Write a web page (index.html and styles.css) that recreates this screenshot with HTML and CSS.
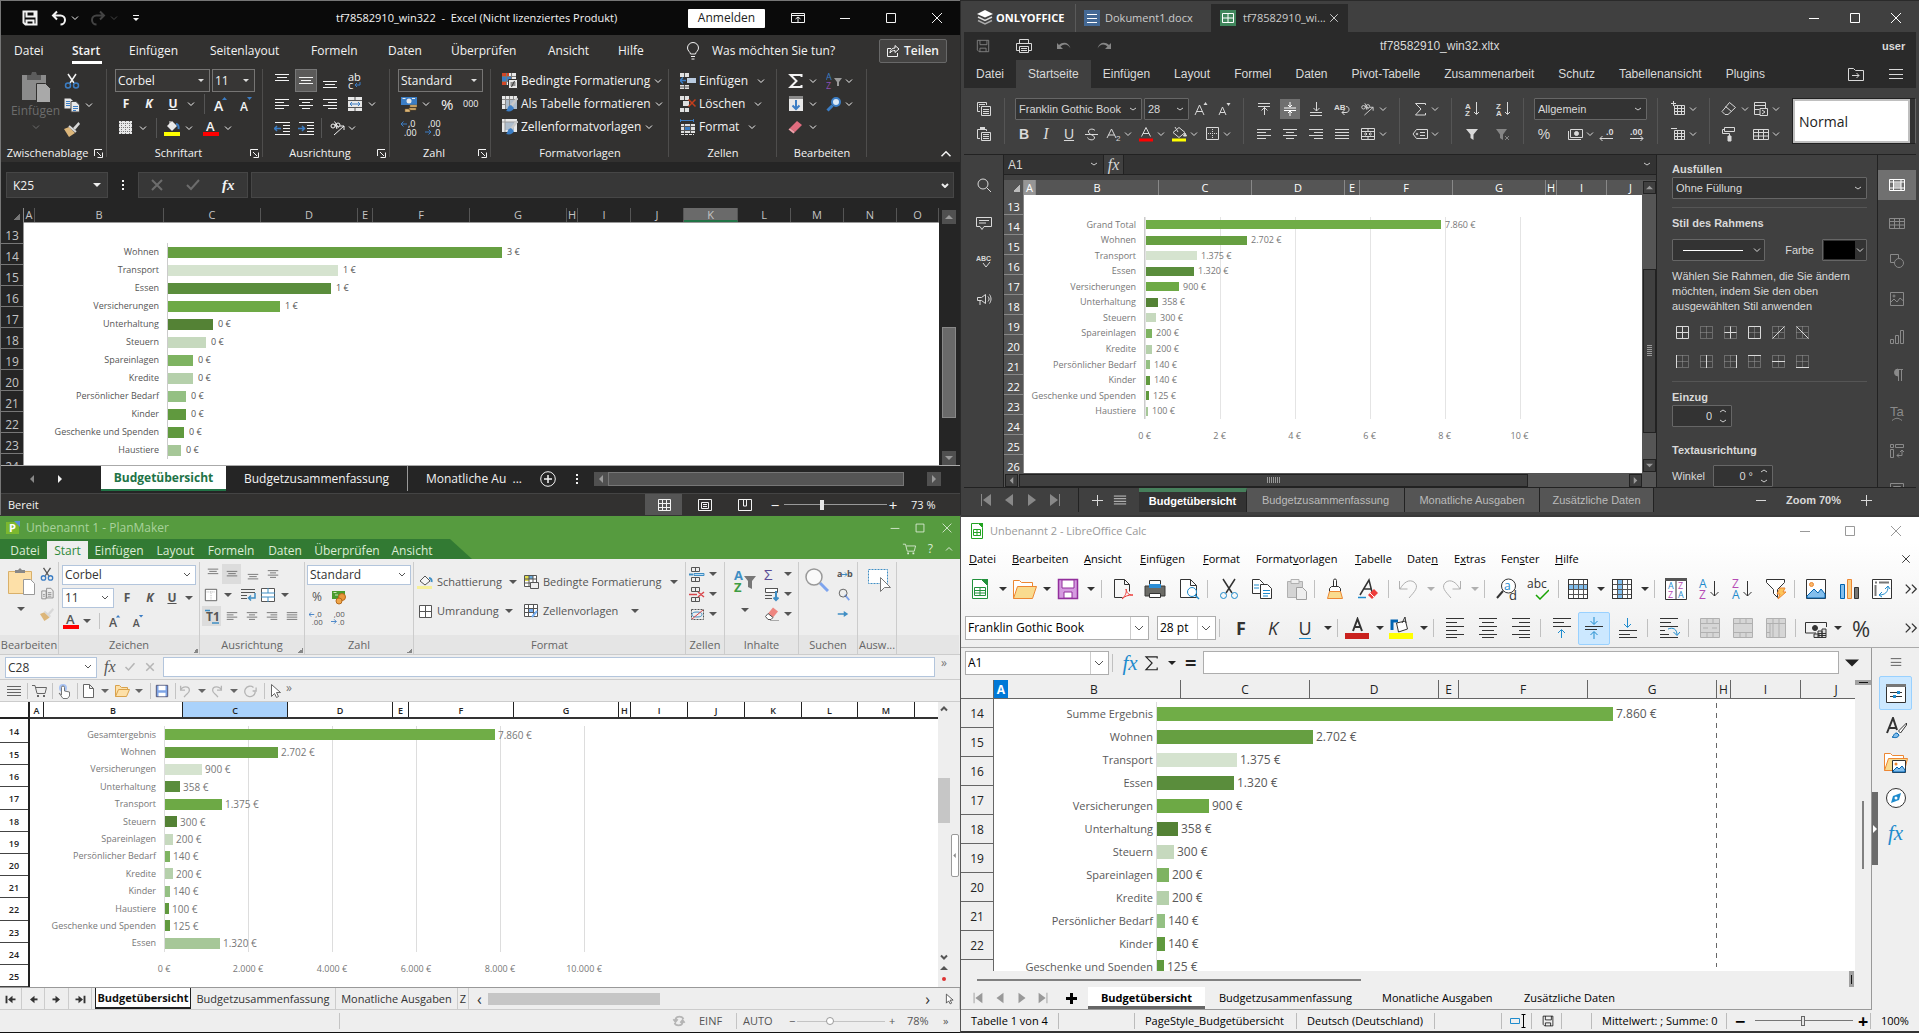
FILE: index.html
```html
<!DOCTYPE html>
<html lang="de">
<head>
<meta charset="utf-8">
<title>Tabellenkalkulationen im Vergleich</title>
<link rel="stylesheet" href="styles.css">
</head>
<body>
<svg class="sprite" aria-hidden="true">
<defs>
<symbol id="chev" viewBox="0 0 8 8"><path d="M1 2.500l3 3 3-3"/></symbol>
<symbol id="tri" viewBox="0 0 8 8"><path d="M0 2h8l-4 4z" fill="currentColor" stroke="none"/></symbol>
<symbol id="up" viewBox="0 0 8 8"><path d="M0 6h8l-4-4z" fill="currentColor" stroke="none"/></symbol>
<symbol id="lt" viewBox="0 0 8 8"><path d="M6 0v8l-4-4z" fill="currentColor" stroke="none"/></symbol>
<symbol id="rt" viewBox="0 0 8 8"><path d="M2 0v8l4-4z" fill="currentColor" stroke="none"/></symbol>
<symbol id="first" viewBox="0 0 16 16"><path d="M13 2v12l-8-6z" fill="currentColor" stroke="none"/><path d="M3.500 2v12"/></symbol>
<symbol id="prev" viewBox="0 0 16 16"><path d="M12 2v12l-8-6z" fill="currentColor" stroke="none"/></symbol>
<symbol id="next" viewBox="0 0 16 16"><path d="M4 2v12l8-6z" fill="currentColor" stroke="none"/></symbol>
<symbol id="last" viewBox="0 0 16 16"><path d="M3 2v12l8-6z" fill="currentColor" stroke="none"/><path d="M12.500 2v12"/></symbol>
<symbol id="min" viewBox="0 0 16 16"><path d="M3 8.500h10"/></symbol>
<symbol id="max" viewBox="0 0 16 16"><path d="M3.500 3.500h9v9h-9z"/></symbol>
<symbol id="x" viewBox="0 0 16 16"><path d="M3 3l10 10M13 3L3 13"/></symbol>
<symbol id="plus" viewBox="0 0 16 16"><path d="M3 8.500h11M8.500 3v11"/></symbol>
<symbol id="menu" viewBox="0 0 16 16"><path d="M1 3.500h14M1 8.500h14M1 12.500h14"/></symbol>
<symbol id="save" viewBox="0 0 16 16"><path d="M1.500 1.500h13v13h-11l-2-2zM4.500 1.500v5h8v-5M4.500 14.500v-4h7v4"/></symbol>
<symbol id="undo" viewBox="0 0 16 16"><path d="M2 5.500h7.500a4.500 4.500 0 0 1 0 9M6 1.500l-4 4 4 4"/></symbol>
<symbol id="redo" viewBox="0 0 16 16"><path d="M14 5.500H6.500a4.500 4.500 0 0 0 0 9M10 1.500l4 4-4 4"/></symbol>
<symbol id="custom" viewBox="0 0 8 8"><path d="M1 1.500h6"/><path d="M1 4h6l-3 3z" fill="currentColor" stroke="none"/></symbol>
<symbol id="ribbon" viewBox="0 0 16 16"><path d="M1.500 3.500h13v9h-13zM1.500 5.500h13M8 12V7M5.500 9L8 7l2.500 2"/></symbol>
<symbol id="bulb" viewBox="0 0 16 18"><path d="M5.500 12c0-2-3-3-3-6a5.500 5.500 0 0 1 11 0c0 3-3 4-3 6zM6 14.500h4M6.500 17h3"/></symbol>
<symbol id="share" viewBox="0 0 14 14"><path d="M5 4.500H1.500v8h10V9M4 9c0-3 2-5 5-5V1.500L13 5 9 8.500V6.500C7 6.500 5 7 4 9z"/></symbol>
<symbol id="clip" viewBox="0 0 32 32"><path d="M2 4h24v25H2z" fill="#8b8b8b" stroke="none"/><path d="M7 4h4l1-3h4l1 3h4v5H7z" fill="#5c5c5c" stroke="none"/><path d="M16.500 12.500h9l5 5v14h-14z" fill="#a9a9a9" stroke="#323130"/></symbol>
<symbol id="cut" viewBox="0 0 16 16"><path d="M4 1l6 9M12 1L6 10" stroke-width="1.500"/><g stroke="#3b7dc4" stroke-width="1.500"><circle cx="4" cy="12.500" r="2.500"/><circle cx="12" cy="12.500" r="2.500"/></g></symbol>
<symbol id="copy" viewBox="0 0 16 16"><path d="M.5 1.500h6l2 2v8h-8z" fill="#e8e8e8" stroke="none"/><path d="M7 4.500h5l3.500 3.500v7H7z" fill="#e8e8e8" stroke="#444"/><path d="M2 4.500h4M2 6.500h4M2 8.500h4M9 9.500h5M9 11.500h5M9 13.500h3" stroke="#3b7dc4"/></symbol>
<symbol id="brush" viewBox="0 0 16 16"><path d="M9 7l5.500-6L16 3l-5 6z" fill="#d8d8d8" stroke="none"/><path d="M0 8l5-2 6 6-6 4z" fill="#dcb67a" stroke="none"/><path d="M5 5l7 6" stroke="#d8d8d8" stroke-width="2"/></symbol>
<symbol id="launch" viewBox="0 0 9 9"><path d="M.5 7V.5H8M3 3l4 4M8.500 3.500v5h-5"/></symbol>
<symbol id="al" viewBox="0 0 16 16"><path d="M1 3.500h14M1 6.500h9M1 9.500h14M1 12.500h9"/></symbol>
<symbol id="ac" viewBox="0 0 16 16"><path d="M1 3.500h14M4 6.500h8M1 9.500h14M4 12.500h8"/></symbol>
<symbol id="ar" viewBox="0 0 16 16"><path d="M1 3.500h14M6 6.500h9M1 9.500h14M6 12.500h9"/></symbol>
<symbol id="aj" viewBox="0 0 16 16"><path d="M1 3.500h14M1 6.500h14M1 9.500h14M1 12.500h14"/></symbol>
<symbol id="vt" viewBox="0 0 16 16"><path d="M1 1.500h14M3 4.500h10M1 7.500h14"/></symbol>
<symbol id="vm" viewBox="0 0 16 16"><path d="M1 4.500h14M3 7.500h10M1 10.500h14"/></symbol>
<symbol id="vb" viewBox="0 0 16 16"><path d="M1 8.500h14M3 11.500h10M1 14.500h14"/></symbol>
<symbol id="wrap" viewBox="0 0 16 16"><text x="1" y="8" font-size="11" fill="currentColor" stroke="none">ab</text><text x="1" y="16" font-size="11" fill="currentColor" stroke="none">c</text><path d="M13 9v3H8M10 10l-2 2 2 2" stroke="#3b7dc4"/></symbol>
<symbol id="merge" viewBox="0 0 16 16"><path d="M1 1h14v14H1z" fill="#e8e8e8" stroke="none"/><path d="M1 4.500h14M1 11.500h14M8 1v3M8 12v3" stroke="#555"/><path d="M3 8h10M5 6L3 8l2 2M11 6l2 2-2 2" stroke="#3b7dc4"/></symbol>
<symbol id="outd" viewBox="0 0 16 16"><path d="M1 2.500h15M9 5.500h7M9 8.500h7M9 11.500h7M1 14.500h15"/><path d="M0 8.500h7M3 6L.5 8.500 3 11" stroke="#3b7dc4" stroke-width="1.500"/></symbol>
<symbol id="ind" viewBox="0 0 16 16"><path d="M1 2.500h15M9 5.500h7M9 8.500h7M9 11.500h7M1 14.500h15"/><path d="M0 8.500h7M4 6l2.500 2.500L4 11" stroke="#3b7dc4" stroke-width="1.500"/></symbol>
<symbol id="orient" viewBox="0 0 16 16"><circle cx="4" cy="6" r="2"/><path d="M6 4l2 5M5.500 1.500l4 6"/><circle cx="9" cy="5" r="2"/><path d="M5 15L15 6M15 10V6h-4"/></symbol>
<symbol id="grid4" viewBox="0 0 16 16"><path d="M1.500 1.500h12v12h-12z"/><path d="M7.500 3v10M3 7.500h10" stroke-dasharray="1 1"/></symbol>
<symbol id="xborder" viewBox="0 0 16 16"><path d="M1 1h13v13H1z" fill="#e8e8e8" stroke="none"/><path d="M3.500 1v13M7.500 1v13M11.500 1v13M1 3.500h13M1 7.500h13M1 11.500h13" stroke="#777" stroke-dasharray="1 1"/></symbol>
<symbol id="fill" viewBox="0 0 16 16"><path d="M3 6l5-5 5 5-5 5z" fill="#e8e8e8" stroke="none"/><path d="M6 5V1" /><path d="M12 4c2 0 3 2 2.500 5" stroke="#3b7dc4" stroke-width="2"/><path d="M0 12h16v4H0z" fill="#ff0" stroke="none"/></symbol>
<symbol id="fcol" viewBox="0 0 16 16"><text x="3" y="11" font-size="13" font-weight="600" fill="currentColor" stroke="none">A</text><path d="M0 12h16v4H0z" fill="red" stroke="none"/></symbol>
<symbol id="fup" viewBox="0 0 16 16"><text x="1" y="15" font-size="14" font-weight="600" fill="currentColor" stroke="none">A</text><path d="M9 4l2.500-3L14 4z" fill="#3b7dc4" stroke="none"/></symbol>
<symbol id="fdn" viewBox="0 0 16 16"><text x="2" y="15" font-size="12" font-weight="600" fill="currentColor" stroke="none">A</text><path d="M9 1l2.500 3L14 1z" fill="#3b7dc4" stroke="none"/></symbol>
<symbol id="cash" viewBox="0 0 16 16"><path d="M0 1h16v8H0z" fill="#3b7dc4" stroke="none"/><circle cx="8" cy="5" r="2.500" fill="#e8e8e8" stroke="none"/><path d="M1.500 2.500h3M11 2.500h3" stroke="#e8e8e8"/><path d="M9 9h7v2H9zM8 12h7v2H8zM4 13h5v3H4z" fill="#dcb67a" stroke="#7a5b26" stroke-width=".5"/></symbol>
<symbol id="dinc" viewBox="0 0 16 16"><text x="7" y="7" font-size="9" fill="currentColor" stroke="none">,0</text><text x="3" y="16" font-size="9" fill="currentColor" stroke="none">,00</text><path d="M0 4h6M2.500 1.500L0 4l2.500 2.500" stroke="#3b7dc4"/></symbol>
<symbol id="ddec" viewBox="0 0 16 16"><text x="3" y="7" font-size="9" fill="currentColor" stroke="none">,00</text><text x="8" y="16" font-size="9" fill="currentColor" stroke="none">,0</text><path d="M0 12h6M3.500 9.500L6 12l-2.500 2.500" stroke="#3b7dc4"/></symbol>
<symbol id="cond" viewBox="0 0 16 16"><path d="M0 0h14v12H0z" fill="#e8e8e8" stroke="none"/><path d="M0 0h7v3H0zM0 9h4v3H0z" fill="#d24726" stroke="none"/><path d="M0 4h9v4H0z" fill="#3b7dc4" stroke="none"/><path d="M4.500 0v12M9.500 0v12M0 3.500h14M0 8.500h14" stroke="#777"/><path d="M6.500 6.500h9v9h-9z" fill="#e8e8e8" stroke="#323130"/><path d="M8.500 10h5M8.500 12h5M12.500 8l-3 6" stroke="#333"/></symbol>
<symbol id="tblf" viewBox="0 0 16 16"><path d="M0 0h15v13H0z" fill="#e8e8e8" stroke="none"/><path d="M4 4h11v9H4z" fill="#aebdcc" stroke="none"/><path d="M3.500 0v13M7.500 0v13M11.500 0v4M0 3.500h15M0 8.500h4" stroke="#888"/><path d="M15.500 2L9 10" stroke="#c9c9c9" stroke-width="2.500"/><path d="M9 9l3 3c-1 3-4 4-8 3 2-1 1-5 5-6z" fill="#3b7dc4" stroke="none"/></symbol>
<symbol id="cellst" viewBox="0 0 16 16"><path d="M0 0h15v13H0z" fill="#e8e8e8" stroke="none"/><path d="M3 3h9v8H3z" fill="#aebdcc" stroke="none"/><path d="M3 0v13M0 3h15" stroke="#999"/><path d="M15.500 2L9 10" stroke="#c9c9c9" stroke-width="2.500"/><path d="M9 9l3 3c-1 3-4 4-8 3 2-1 1-5 5-6z" fill="#3b7dc4" stroke="none"/></symbol>
<symbol id="cins" viewBox="0 0 16 16"><path d="M0 0h9v4H0zM0 12h9v4H0z" fill="#e0e0e0" stroke="none"/><path d="M7 5h9v5H7z" fill="#b9cbe0" stroke="none"/><path d="M4.500 0v4M4.500 12v4M0 14h9" stroke="#555"/><path d="M0 7.500h6M3 4.500l-3 3 3 3" stroke="#3b7dc4" stroke-width="1.500"/></symbol>
<symbol id="cdel" viewBox="0 0 16 16"><path d="M0 0h9v4H0zM0 12h9v4H0zM3 5h6v5H3z" fill="#e0e0e0" stroke="none"/><path d="M4.500 0v4M4.500 12v4" stroke="#555"/><path d="M8.500 3.500l7 7M15.500 3.500l-7 7" stroke="#c43e1c" stroke-width="1.500"/></symbol>
<symbol id="cfmt" viewBox="0 0 16 16"><path d="M1 1.500h12M.5 0v3M13.500 0v3" stroke="#3b7dc4"/><path d="M1 5h14v9H1z" fill="#e0e0e0" stroke="none"/><path d="M5 7h5v4H5z" fill="#3b7dc4" stroke="none"/><path d="M4.500 5v9M10.500 5v9M1 7.500h14M1 11.500h14" stroke="#555"/><path d="M1 15.500h13" stroke="#e0e0e0" stroke-dasharray="3 1"/></symbol>
<symbol id="sum" viewBox="0 0 16 16"><path d="M13.500 4V2H2.500l6 6-6 6h11v-2" stroke-width="2"/></symbol>
<symbol id="azf" viewBox="0 0 16 16"><text x="0" y="7" font-size="9" fill="#3b7dc4" stroke="none">A</text><text x="0" y="16" font-size="9" fill="#8e4fb5" stroke="none">Z</text><path d="M8 5h8l-3 4v4h-2V9z" fill="#9a9a9a" stroke="none"/></symbol>
<symbol id="fdown" viewBox="0 0 16 16"><path d="M1 1h14v14H1z" fill="#e8e8e8" stroke="none"/><path d="M1 0h14v3H1z" fill="#8a8a8a" stroke="none"/><path d="M8 4v9M4.500 9.500L8 13l3.500-3.500" stroke="#3b7dc4" stroke-width="2"/></symbol>
<symbol id="find" viewBox="0 0 16 16"><circle cx="10" cy="6" r="4" fill="#dbe9f7" stroke="#3b7dc4" stroke-width="2"/><path d="M6.500 9.500l-5 5" stroke="#3b7dc4" stroke-width="3"/></symbol>
<symbol id="eras" viewBox="0 0 16 16"><path d="M9 2l5 4-7 7-5-4z" fill="#e06c7e" stroke="none"/><path d="M2 9l5 4-1.500 1.500-5-4z" fill="#f0a0aa" stroke="none"/></symbol>
<symbol id="check" viewBox="0 0 16 16"><path d="M2 8l4 4 8-9" stroke-width="2"/></symbol>
<symbol id="normal" viewBox="0 0 16 16"><path d="M2.500 2.500h12v11h-12zM6.500 2v12M10.500 2v12M2 6.500h13M2 10.500h13"/></symbol>
<symbol id="page" viewBox="0 0 16 16"><path d="M1.500 2.500h13v11h-13zM4.500 5.500h7v6h-7zM6 7.500h4M6 9.500h4"/></symbol>
<symbol id="brk" viewBox="0 0 16 16"><path d="M1.500 13.500v-11h13v11zM6.500 3v6h3V3"/></symbol>
<symbol id="plusc" viewBox="0 0 16 16"><circle cx="8" cy="8" r="7.300"/><path d="M8 4v8M4 8h8" stroke-width="1.500"/></symbol>
<symbol id="dots" viewBox="0 0 8 16"><path d="M3 3h2v2H3zM3 7h2v2H3zM3 11h2v2H3z" fill="currentColor" stroke="none"/></symbol>

<symbol id="oologo" viewBox="0 0 16 16"><path d="M8 7.500L0 4l8-4 8 4z" fill="#fff" stroke="none"/><path d="M1 7l7 3.500L15 7" stroke="#ddd" stroke-width="1.500"/><path d="M1 10.500L8 14l7-3.500" stroke="#aaa" stroke-width="1.500"/></symbol>
<symbol id="oodoc" viewBox="0 0 16 16"><path d="M0 0h16v16H0z" fill="#446995" stroke="none"/><path d="M3 4.500h10M3 8.500h10M3 12.500h10" stroke="#fff"/></symbol>
<symbol id="oosheet" viewBox="0 0 16 16"><path d="M0 0h16v16H0z" fill="#40865c" stroke="none"/><path d="M2.500 3.500h11v9h-11zM8 3.500v9M2.500 8h11" stroke="#fff"/></symbol>
<symbol id="print" viewBox="0 0 16 16"><path d="M3.500 5.500v-4h9v4M3.500 12.500h-3v-7h15v7h-3M3.500 8.500h9v6h-9zM5 10.500h6M5 12.500h6"/></symbol>
<symbol id="ooundo" viewBox="0 0 16 16"><path d="M1 5v6h6L4.500 8.500C8 5 12 6 14.500 10.500 13 4 7 3 3 7z" fill="currentColor" stroke="none"/></symbol>
<symbol id="ooredo" viewBox="0 0 16 16"><path d="M15 5v6H9l2.500-2.500C8 5 4 6 1.500 10.500 3 4 9 3 13 7z" fill="currentColor" stroke="none"/></symbol>
<symbol id="folder" viewBox="0 0 16 16"><path d="M.5 14.500v-12h5l2 2h8v10zM4 9.500h7M8.500 7l2.500 2.500L8.500 12"/></symbol>
<symbol id="oocopy" viewBox="0 0 16 16"><path d="M4 10.500H1.500v-9h9V4M3 3.500h6M3 5.500h1M5.500 5.500h9v9h-9zM7 8.500h6M7 10.500h6M7 12.500h6"/></symbol>
<symbol id="oopaste" viewBox="0 0 16 16"><path d="M4 12.500H1.500v-9H4M8 3.500h2.500V5M5.500 6.500h9v8h-9zM7 8.500h6M7 10.500h6M7 12.500h6"/><path d="M4 1h5v3H4z" fill="currentColor" stroke="none"/></symbol>
<symbol id="oofup" viewBox="0 0 16 16"><path d="M2 14L6.500 4 11 14M3.500 10.500h6"/><path d="M10.500 4L12.500 1l2 3z" fill="currentColor" stroke="none"/></symbol>
<symbol id="oofdn" viewBox="0 0 16 16"><path d="M3 14l3.500-8L10 14M4 11.500h5"/><path d="M10.500 2l2 3 2-3z" fill="currentColor" stroke="none"/></symbol>
<symbol id="ooa" viewBox="0 0 16 16"><path d="M3.500 10.500L8 1.500l4.500 9M5 7.500h6"/><path d="M1 12.500h14v3H1z" fill="red" stroke="none"/></symbol>
<symbol id="oofill" viewBox="0 0 16 16"><path d="M2 6.500l6-5 6 5-6 5zM4 1l3 5"/><path d="M14 7l1.500 3h-3z" fill="currentColor"/><path d="M1 12.500h14v3H1z" fill="#ff0" stroke="none"/></symbol>
<symbol id="asub" viewBox="0 0 16 16"><path d="M1 12L5.500 3 10 12M2.500 9h6"/><text x="10" y="15" font-size="8" fill="currentColor" stroke="none">2</text></symbol>
<symbol id="strike" viewBox="0 0 16 16"><path d="M2 8.500h13M12 4.500C10 2 5 3 5.500 6S12 9 11.500 12 5 14 4.500 11.500"/></symbol>
<symbol id="oovt" viewBox="0 0 16 16"><path d="M2 2.500h12M2 5.500h12M8.500 14V6M5.500 9.500l3-3 3 3"/></symbol>
<symbol id="oovm" viewBox="0 0 16 16"><path d="M2 7h12M2 9.500h12M8 1v5M6 4l2 2 2-2M8 15v-5M6 12l2-2 2 2"/></symbol>
<symbol id="oovb" viewBox="0 0 16 16"><path d="M2 11.500h12M2 14.500h12M8.500 1v9M5.500 7l3 3 3-3"/></symbol>
<symbol id="oowrap" viewBox="0 0 16 16"><text x="0" y="9" font-size="8" font-weight="700" fill="currentColor" stroke="none">AB</text><path d="M12 5.500c4 0 4 6 0 6H8M10.500 9L8 11.500l2.500 2.500"/></symbol>
<symbol id="oomerge" viewBox="0 0 16 16"><path d="M1.500 2.500h13v11h-13zM1.500 5.500h13M1.500 10.500h13M8 2.500v3M8 10.500v3M4 8h3M9 8h3M5.500 6.500L7 8 5.500 9.500M10.500 6.500L9 8l1.500 1.500"/></symbol>
<symbol id="oosum" viewBox="0 0 16 16"><path d="M13.500 4V2.500H3.500L9 8l-5.500 6h10V12"/></symbol>
<symbol id="ootag" viewBox="0 0 16 16"><path d="M4.500 3.500h11v9h-11L1 8zM8 6.500h5M8 9.500h5"/><circle cx="5" cy="8" r=".8"/></symbol>
<symbol id="ooaz" viewBox="0 0 16 16"><text x="1" y="8" font-size="8" font-weight="700" fill="currentColor" stroke="none">A</text><text x="1" y="15" font-size="8" font-weight="700" fill="currentColor" stroke="none">Z</text><path d="M12.500 1v12M10 11l2.500 2.500L15 11"/></symbol>
<symbol id="ooza" viewBox="0 0 16 16"><text x="1" y="8" font-size="8" font-weight="700" fill="currentColor" stroke="none">Z</text><text x="1" y="15" font-size="8" font-weight="700" fill="currentColor" stroke="none">A</text><path d="M12.500 1v12M10 11l2.500 2.500L15 11"/></symbol>
<symbol id="filt" viewBox="0 0 16 16"><path d="M2 3h12L9.500 8.500V14L6.500 12V8.500z" fill="currentColor" stroke="none"/></symbol>
<symbol id="filtx" viewBox="0 0 16 16"><path d="M1 3h11L8 8.500V14L5 12V8.500z" fill="currentColor" stroke="none"/><path d="M10 10l4 4M14 10l-4 4"/></symbol>
<symbol id="oocash" viewBox="0 0 16 16"><path d="M3.500 3.500h12v8h-12zM1.500 5v8.500H14"/><circle cx="9.500" cy="7.500" r="2" fill="currentColor"/></symbol>
<symbol id="oodd" viewBox="0 0 16 16"><text x="7" y="9" font-size="9" font-weight="700" fill="currentColor" stroke="none">.0</text><path d="M1 12.500h13M3.500 10L1 12.500 3.500 15"/></symbol>
<symbol id="oodi" viewBox="0 0 16 16"><text x="1" y="9" font-size="9" font-weight="700" fill="currentColor" stroke="none">.00</text><path d="M1 12.500h13M11.500 10l2.500 2.500-2.500 2.500"/></symbol>
<symbol id="ooins" viewBox="0 0 16 16"><path d="M4.500 4.500h10v9h-10zM4.500 7.500h10M4.500 10.500h10M7.500 4.500v9M11.500 4.500v9M1 2.500h5M3.500 0v5"/></symbol>
<symbol id="oodel" viewBox="0 0 16 16"><path d="M4.500 4.500h10v9h-10zM4.500 7.500h10M4.500 10.500h10M7.500 4.500v9M11.500 4.500v9M1 2.500h6"/></symbol>
<symbol id="ooeras" viewBox="0 0 16 16"><path d="M8.500 1.500l6 5-7.500 7H4l-3-3zM4.500 5.500l6 5"/></symbol>
<symbol id="oocond" viewBox="0 0 16 16"><path d="M1.500 1.500h11v12h-11zM1.500 4.500h11M1.500 8.500h5"/><path d="M7 7.500h7.500v7H7z" fill="#404040"/><path d="M9 9l3 2-3 2"/></symbol>
<symbol id="oobrush" viewBox="0 0 16 16"><path d="M3.500 1.500h10v4h-10zM3.500 3.500h-2v4h7v3"/><path d="M7 10h3v5H7z" fill="currentColor"/></symbol>
<symbol id="ootab" viewBox="0 0 16 16"><path d="M.5 3.500h15v10H.5zM.5 6.500h15M.5 10h15M5.500 3.500v10M10.500 3.500v10"/></symbol>
<symbol id="search" viewBox="0 0 16 16"><circle cx="7" cy="7" r="5"/><path d="M10.500 10.500L15 15"/></symbol>
<symbol id="comment" viewBox="0 0 16 16"><path d="M.5 2.500h15v9H8l-2 3-2-3H.5zM3 5.500h10M3 8h7"/></symbol>
<symbol id="spell" viewBox="0 0 16 16"><text x="0" y="8" font-size="7" font-weight="700" fill="currentColor" stroke="none">ABC</text><path d="M7 10l3 4 4-5"/></symbol>
<symbol id="horn" viewBox="0 0 16 16"><path d="M1.500 6.500h4l4-3v9l-4-3h-4zM4 10v4M12 5.500c1.500 2 1.500 3 0 5M13.500 3.500c2 3 2 6 0 9"/></symbol>
<symbol id="oocell" viewBox="0 0 16 16"><path d="M5 5.500h7v5H5z" fill="#bbb" stroke="none"/><path d="M.5 2.500h15v11H.5zM4.500 2.500v11M12 2.500v11M.5 5h15M.5 11h15"/></symbol>
<symbol id="shape" viewBox="0 0 16 16"><path d="M5 9.500H1.500v-8h8V5"/><circle cx="10" cy="10" r="4.500"/></symbol>
<symbol id="pic" viewBox="0 0 16 16"><path d="M1.500 1.500h13v13h-13zM2 11l3-3 3 3 3-4 3.500 3"/><circle cx="5" cy="5" r="1"/></symbol>
<symbol id="chart" viewBox="0 0 16 16"><path d="M1.500 10.500h3v4h-3zM6.500 6.500h3v8h-3zM11.500 1.500h3v13h-3z"/></symbol>
<symbol id="para" viewBox="0 0 16 16"><path d="M9.500 14V2.500M12.500 14V2.500M14 2.500H7"/><path d="M9 2a3 3 0 0 0 0 7z" fill="currentColor"/></symbol>
<symbol id="ta" viewBox="0 0 16 16"><text x="1" y="11" font-size="13" fill="currentColor" stroke="none">Ta</text><path d="M3 15.500c4-3 6-3 10 0"/></symbol>
<symbol id="pivot" viewBox="0 0 16 16"><path d="M1.500 1.500h3v3h-3zM6.500 1.500h8v3h-8zM1.500 6.500h3v8h-3zM8 12.500h5v-5M10 10.500L8 12.500l2 2M11 9l2-2 2 2"/></symbol>
<symbol id="slicer" viewBox="0 0 16 16"><path d="M1.500 2.500h13v11h-13zM4.500 5.500h7v2h-7zM4.500 10h7"/></symbol>
<symbol id="ball" viewBox="0 0 14 14"><path d="M.5 .5h12v12H.5zM6.500 .5v12M.5 6.500h12"/></symbol>
<symbol id="bno" viewBox="0 0 14 14"><path d="M.5 .5h12v12H.5zM6.500 .5v12M.5 6.500h12" stroke="#999" stroke-dasharray="1 1"/></symbol>

<symbol id="pmlogo" viewBox="0 0 14 14"><path d="M0 1h13v12H0z" fill="#7cb82f" stroke="none"/><path d="M8 0h6v6z" fill="#5b8fd6" stroke="none"/><text x="3" y="11" font-size="11" font-weight="700" fill="#fff" stroke="none">P</text></symbol>
<symbol id="cart" viewBox="0 0 16 16"><path d="M1 2.500h3l2 8h8l1.500-6H5"/><path d="M6 12h2v2H6zM12 12h2v2h-2z" fill="currentColor" stroke="none"/></symbol>
<symbol id="pmclip" viewBox="0 0 28 28"><path d="M1.500 4.500h23v22h-23z" fill="#fde0a8" stroke="#d9b06a"/><path d="M8 5V3h3l2-2 2 2h3v3H8z" fill="#888" stroke="none"/><path d="M16.500 12.500h7l4 4v11h-11z" fill="#fff" stroke="#999"/></symbol>
<symbol id="pmcopy" viewBox="0 0 16 16"><path d="M2 4.500h5v9H2zM7.500 1.500h5l2.500 3v8H7.500zM9 6.500h4M9 8.500h4M9 10.500h4M3.500 8.500h2M3.500 10.500h2" stroke="#888"/></symbol>
<symbol id="pmborder" viewBox="0 0 16 16"><path d="M1.500 1.500h13v13h-13z" fill="#fff"/><path d="M3 4.500h10M8 4v9" stroke="#aaa" stroke-dasharray="1 1"/></symbol>
<symbol id="pmwrap" viewBox="0 0 16 16"><path d="M1 2.500h14M1 5.500h14M1 8.500h6M1 11.500h6"/><path d="M15 6v5H9M11 8.500L8.500 11l2.500 2.500" stroke="#3f8ec4" stroke-width="1.500"/></symbol>
<symbol id="pmmerge" viewBox="0 0 16 16"><path d="M1.500 1.500h13v13h-13z" fill="#fff"/><path d="M1 6h14M1 10h14M8 1v5M8 10v5" stroke="#3f8ec4"/></symbol>
<symbol id="pmcash" viewBox="0 0 16 16"><path d="M1 2h13v8H1z" fill="#4a9c2d" stroke="none"/><path d="M2.500 3.500h3M4 6h3" stroke="#cfe8b8"/><circle cx="11" cy="8" r="3.500" fill="#e8973a" stroke="#b56a1c"/><circle cx="8" cy="12" r="3" fill="#f0a64a" stroke="#b56a1c"/></symbol>
<symbol id="pmfill" viewBox="0 0 16 16"><path d="M3 7l5-5 5 5-5 4z" fill="#f6f6f6"/><path d="M12 4c2 0 3 2 2.500 4" stroke="#3f8ec4" stroke-width="2"/><path d="M0 12h15v3H0z" fill="#f7f09a" stroke="none"/></symbol>
<symbol id="pmgrid" viewBox="0 0 16 16"><path d="M2.500 2.500h12v12h-12z" fill="#fff"/><path d="M8.500 2v12M2 8.500h12"/></symbol>
<symbol id="pmcond" viewBox="0 0 16 16"><path d="M1.500 1.500h12v11h-12z" fill="#fff"/><path d="M2 2h4v5H2z" fill="#e4de4e" stroke="none"/><path d="M6 2h4v3H6z" fill="#68a8d8" stroke="none"/><path d="M6 1v11M10 1v11M2 5h12M2 9h12"/><path d="M7.500 8.500h8v6h-8z" fill="#eee"/></symbol>
<symbol id="pmstyle" viewBox="0 0 16 16"><path d="M1.500 1.500h13v12h-13z" fill="#fff"/><path d="M5.500 1v12M10.500 1v12M1 5.500h14M1 9.500h14"/><path d="M6 6h4v3H6z" fill="#77aef0" stroke="none"/><path d="M14 8l-5 6" stroke="#77aef0" stroke-width="2"/></symbol>
<symbol id="pmins" viewBox="0 0 16 16"><path d="M2.500 1.500h8v4h-8zM6.500 1v4M2.500 11.500h8v4h-8zM6.500 11v4"/><path d="M5 7.500h10v2H5z" fill="#bcdcf2" stroke="#3f8ec4"/><path d="M0 8.500h4" stroke="#3f8ec4" stroke-width="2"/></symbol>
<symbol id="pmdel" viewBox="0 0 16 16"><path d="M2.500 1.500h8v4h-8zM6.500 1v4M2.500 11.500h8v4h-8zM6.500 11v4"/><path d="M0 8.500h8M9 6l6 5M15 6l-6 5" stroke="#d8474c" stroke-width="1.500"/></symbol>
<symbol id="pmhide" viewBox="0 0 16 16"><path d="M2.500 3.500h12v10h-12z" stroke-dasharray="2 1"/><ellipse cx="8" cy="8.500" rx="5" ry="2.500" stroke="#3f8ec4"/><path d="M3 13L14 4" stroke="#d8474c"/></symbol>
<symbol id="pmaz" viewBox="0 0 24 24"><text x="1" y="11" font-size="13" font-weight="700" fill="#3f8ec4" stroke="none">A</text><text x="1" y="23" font-size="13" font-weight="700" fill="#3f9c42" stroke="none">Z</text><path d="M11 7h12l-4 5v8l-4-2v-6z" fill="#777" stroke="none"/></symbol>
<symbol id="pmfilld" viewBox="0 0 16 16"><path d="M1.500 2.500h12v4h-12z" fill="#fff"/><path d="M1 9.500h7M1 12.500h7M1 2.500h13"/><path d="M12 5v9M9.500 11.500L12 14l2.500-2.500" stroke="#3f8ec4" stroke-width="2"/></symbol>
<symbol id="pmeras" viewBox="0 0 16 16"><path d="M9 1.500l5 4-5 6-5-4z" fill="#ee8680" stroke="none"/><path d="M4 7.500l5 4-2 2H4l-2.500-3z" fill="#fff"/><path d="M6 14.500h9" stroke="#aaa"/></symbol>
<symbol id="pmfind" viewBox="0 0 24 24"><path d="M15 15l8 8" stroke="#7ea4ee" stroke-width="3"/><circle cx="9" cy="9" r="8" fill="#fafafa" stroke="#999" stroke-width="1.500"/></symbol>
<symbol id="pmrep" viewBox="0 0 16 16"><text x="0" y="11" font-size="9" font-weight="700" fill="#555" stroke="none">a</text><text x="10" y="11" font-size="9" font-weight="700" fill="#555" stroke="none">b</text><path d="M5 8.500h5M8 6.500l2 2-2 2" stroke="#3f8ec4"/></symbol>
<symbol id="pmfn" viewBox="0 0 16 16"><path d="M9 9l5 6" stroke="#7ea4ee" stroke-width="2"/><circle cx="7" cy="7" r="4.500"/></symbol>
<symbol id="pmgo" viewBox="0 0 16 16"><path d="M1 8h10" stroke="#3f8ec4" stroke-width="2"/><path d="M9 4l6 4-6 4z" fill="#3f8ec4" stroke="none"/></symbol>
<symbol id="pmsel" viewBox="0 0 24 24"><path d="M1.500 1.500h19v14h-19z" fill="#fff" stroke="#3f8ec4" stroke-dasharray="2 1"/><path d="M13.500 9.500v14l4-4h6z" fill="#fff" stroke="#777"/></symbol>
<symbol id="pmt1" viewBox="0 0 16 16"><text x="2" y="13" font-size="12" font-weight="700" fill="currentColor" stroke="none">T1</text><path d="M1 2.500h5M8 15h7" stroke="#3f8ec4" stroke-width="1.500"/></symbol>
<symbol id="hand" viewBox="0 0 16 16"><circle cx="7" cy="5" r="4" fill="#a9c4f5" stroke="none"/><path d="M5.500 12V4.500a1.500 1.500 0 0 1 3 0V8l5 1v4l-2 2.500H7L3 10z" fill="#fff" stroke="#777"/></symbol>
<symbol id="newdoc" viewBox="0 0 16 16"><path d="M3.500 1.500h6l4 4v9h-10zM9.500 1.500v4h4" fill="#fff"/></symbol>
<symbol id="open" viewBox="0 0 16 16"><path d="M1.500 13.500v-11h4l2 2h6v2" stroke="#d9a24c" fill="#fde0a8"/><path d="M1.500 13.500l3-7h11l-3 7z" fill="#fde0a8" stroke="#d9a24c"/></symbol>
<symbol id="pmsave" viewBox="0 0 16 16"><path d="M1.500 1.500h13v13h-13z" fill="#7ea4e6" stroke="#4a4a6a"/><path d="M4 2h8v5H4zM4 10h8v4H4z" fill="#fff" stroke="none"/></symbol>
<symbol id="curve" viewBox="0 0 16 16"><path d="M3 2v5h5M3 7c2-5 10-5 10 0 0 4-4 4-6 8" stroke-width="1.500"/></symbol>
<symbol id="curver" viewBox="0 0 16 16"><path d="M13 2v5H8M13 7C11 2 3 2 3 7c0 4 4 4 6 8" stroke-width="1.500"/></symbol>
<symbol id="cycle" viewBox="0 0 16 16"><path d="M14 9A6 6 0 1 1 12 4M15 4v4h-4" stroke-width="1.500"/></symbol>
<symbol id="cursor" viewBox="0 0 16 16"><path d="M4.500 1.500v12l3-3 2 4 2-1-2-4h4z" fill="#fff"/></symbol>
<symbol id="refresh" viewBox="0 0 16 16"><path d="M13 6c-1-4-8-4-9 0v2M3 10c1 4 8 4 9 0V8M1.500 6L4 9l2.500-3M9.500 10L12 7l2.500 3" stroke-width="2"/></symbol>
<symbol id="hm" viewBox="0 0 16 16"><path d="M7 8.500h7" stroke-width="2.500"/><path d="M10 3.500L4 8.500l6 5z" fill="currentColor" stroke="none"/></symbol>
<symbol id="hp" viewBox="0 0 16 16"><path d="M2 8.500h7" stroke-width="2.500"/><path d="M6 3.500l6 5-6 5z" fill="currentColor" stroke="none"/></symbol>
<symbol id="hf" viewBox="0 0 16 16"><path d="M2 3.500v10M7 8.500h7" stroke-width="2.500"/><path d="M10 3.500l-6 5 6 5z" fill="currentColor" stroke="none"/></symbol>
<symbol id="hl" viewBox="0 0 16 16"><path d="M14 3.500v10M2 8.500h7" stroke-width="2.500"/><path d="M6 3.500l6 5-6 5z" fill="currentColor" stroke="none"/></symbol>

<symbol id="lologo" viewBox="0 0 16 16"><path d="M2.500 .5h7l4 4v11h-11z" fill="#fff" stroke="#22a322"/><path d="M9 0h5v5z" fill="#22a322" stroke="none"/><path d="M4.500 6.500h7v6h-7zM8 6.500v6M4.500 9.500h7" stroke="#22a322"/></symbol>
<symbol id="lonew" viewBox="0 0 22 22"><path d="M3.500 1.500h9l6 6v13h-15z" fill="#fff" stroke="#22913c"/><path d="M12 1h7v7z" fill="#22913c" stroke="none"/><path d="M5.500 9.500h11v8h-11zM5.500 12.500h11M5.500 15h11M11 9.500v8" stroke="#22913c"/></symbol>
<symbol id="loopen" viewBox="0 0 24 22"><path d="M.5 20.500v-18h6l2 2h11v5" fill="#fff" stroke="#ed8733"/><path d="M.5 20.500l4-12h19l-4 12z" fill="#f9db8f" stroke="#ed8733"/></symbol>
<symbol id="losave" viewBox="0 0 22 22"><path d="M1.500 1.500h19v19h-19z" fill="#d59be0" stroke="#922f9c" stroke-width="1.500"/><path d="M5 2h12v8H5zM7 14h8v6H7z" fill="#fff" stroke="#922f9c"/></symbol>
<symbol id="lopdf" viewBox="0 0 22 22"><path d="M2.500 1.500h10l5 5v7M2.500 1.500v18h8M12.500 1.500v5h5" fill="none"/><path d="M14 11c1 4 2 6 7 6-5 0-8 1-11 4 3-3 5-6 4-10z" stroke="#ed3d3b"/></symbol>
<symbol id="loprint" viewBox="0 0 22 22"><path d="M5.500 2.500h11v6h-11z" fill="#fff"/><path d="M1 8h20v10H1z" fill="#6b6b66" stroke="#3a3a38"/><path d="M5 6h12v4H5z" fill="#2a8ed8" stroke="none"/><path d="M5.500 15.500h11v4h-11z" fill="#fff"/></symbol>
<symbol id="loprev" viewBox="0 0 22 22"><path d="M1.500 1.500h10l6 6v12h-16zM11.500 1.500v6h6" fill="#fff"/><circle cx="13" cy="14" r="4.500" fill="#fff" stroke="#1e8bcd"/><path d="M16 17l4 4" stroke="#1e8bcd" stroke-width="1.500"/></symbol>
<symbol id="locut" viewBox="0 0 22 22"><path d="M5 1l9 14M17 1L8 15" stroke-width="1.500"/><circle cx="5.500" cy="17.500" r="3" stroke="#1e8bcd"/><circle cx="16.500" cy="17.500" r="3" stroke="#1e8bcd"/></symbol>
<symbol id="locopy" viewBox="0 0 22 22"><path d="M1.500 1.500h7l4 4v10h-11z" fill="#fff"/><path d="M9.500 6.500h7l4 4v10h-11z" fill="#fff"/><path d="M3 7h5M3 10h5M12 12.500h7M12 15.500h7M12 18h5" stroke="#1e8bcd"/></symbol>
<symbol id="lopaste" viewBox="0 0 22 22"><path d="M2.500 3.500h15v16h-15z" fill="#d4d4d4" stroke="#b0b0b0"/><path d="M6 1.500h8v4H6z" fill="#eee" stroke="#b0b0b0"/><path d="M11.500 9.500h6l4 4v8h-10z" fill="#eee" stroke="#a0a0a0"/></symbol>
<symbol id="loclone" viewBox="0 0 22 22"><path d="M9.500 8.500V2.500a1.500 1.500 0 0 1 3 0v6M5.500 13.500v-3l2-2h7l2 2v3z" fill="#fff"/><path d="M5.500 13.500h11l2 7h-15z" fill="#f9db8f" stroke="#ed8733"/></symbol>
<symbol id="loclear" viewBox="0 0 22 22"><path d="M3 17L12 2l3 12M6 11h8" stroke-width="1.500"/><path d="M1 19.500h8" stroke="#1e8bcd" stroke-width="1.500"/><path d="M17 11l4 4-6 6-4-4z" fill="#ed3d3b" stroke="none"/><path d="M13 15l4 4" stroke="#fff"/></symbol>
<symbol id="loundo" viewBox="0 0 22 22"><path d="M2.500 3v8h8M3 11C7 4 12 1 17 4c6 5 0 10-5 16"/></symbol>
<symbol id="loredo" viewBox="0 0 22 22"><path d="M19.500 3v8h-8M19 11C15 4 10 1 5 4c-6 5 0 10 5 16"/></symbol>
<symbol id="lofind" viewBox="0 0 22 22"><circle cx="12.500" cy="8" r="7" fill="#fff"/><path d="M7 13l-6 7" stroke-width="2"/><text x="8" y="12" font-size="12" fill="#1e8bcd" stroke="none">a</text><text x="13" y="22" font-size="13" fill="currentColor" stroke="none">d</text></symbol>
<symbol id="loabc" viewBox="0 0 22 22"><text x="0" y="10" font-size="12" fill="currentColor" stroke="none">abc</text><path d="M9 17l4 4 9-9" stroke="#18a303" stroke-width="1.500"/></symbol>
<symbol id="lorow" viewBox="0 0 22 22"><path d="M1.500 1.500h19v19h-19z" fill="#fff"/><path d="M1 6h20v5H1z" fill="#83beec" stroke="none"/><path d="M6.500 1v20M11.500 1v20M16.500 1v20M1 6.500h20M1 11.500h20M1 16.500h20" stroke="#555"/><path d="M1.500 1.500h19v19h-19z"/></symbol>
<symbol id="locol" viewBox="0 0 22 22"><path d="M1.500 1.500h19v19h-19z" fill="#fff"/><path d="M6 1h5v20H6z" fill="#83beec" stroke="none"/><path d="M6.500 1v20M11.500 1v20M16.500 1v20M1 6.500h20M1 11.500h20M1 16.500h20" stroke="#555"/><path d="M1.500 1.500h19v19h-19z"/></symbol>
<symbol id="losort" viewBox="0 0 22 22"><path d="M.5 .5h21v21H.5zM11 3v18" fill="#fff"/><path d="M0 0h22v3H0z" fill="#555" stroke="none"/><g font-size="9" stroke="none"><text x="3" y="11" fill="#1e8bcd">A</text><text x="3" y="20" fill="#b54bb5">Z</text><text x="13" y="11" fill="#b54bb5">Z</text><text x="13" y="20" fill="#1e8bcd">A</text></g></symbol>
<symbol id="loaz" viewBox="0 0 22 22"><g font-size="12" stroke="none"><text x="1" y="10" fill="#1e8bcd">A</text><text x="1" y="21" fill="#b54bb5">Z</text></g><path d="M16.500 3v15M12.500 14l4 4 4-4"/></symbol>
<symbol id="loza" viewBox="0 0 22 22"><g font-size="12" stroke="none"><text x="1" y="10" fill="#b54bb5">Z</text><text x="1" y="21" fill="#1e8bcd">A</text></g><path d="M16.500 3v15M12.500 14l4 4 4-4"/></symbol>
<symbol id="lofilt" viewBox="0 0 22 22"><path d="M1.500 1.500h18v3l-7 7v8l-4-4v-4l-7-7z" fill="#fff"/><path d="M15 10h5l-2 4h3l-8 7 2-5h-3z" fill="#fcc45a" stroke="#ed8733"/></symbol>
<symbol id="loimg" viewBox="0 0 22 22"><path d="M1.500 1.500h19v19h-19z" fill="#fff"/><path d="M2 18l7-7 4 4 3-4 4 5v4H2z" fill="#83beec" stroke="#0063b1"/><circle cx="6.500" cy="6.500" r="2" fill="#f8b86b" stroke="#ed8733"/></symbol>
<symbol id="lochart" viewBox="0 0 22 22"><path d="M2.500 6.500h4v14h-4z" fill="#83beec" stroke="#0063b1"/><path d="M9.500 1.500h4v19h-4z" fill="#f9cf87" stroke="#ed8733"/><path d="M16.500 9.500h4v11h-4z" fill="#797774"/></symbol>
<symbol id="lopivot" viewBox="0 0 22 22"><path d="M1.500 1.500h19v19h-19z" fill="#fff"/><path d="M4 4.500h2M8 4.500h10M4.500 7v11" stroke="#777" stroke-width="2" /><path d="M8 17c6 0 9-3 9-8M14 11l3-3 2 3M11 14l-3 3 3 2" stroke="#1e8bcd"/></symbol>
<symbol id="more" viewBox="0 0 16 16"><path d="M2 3l5 5-5 5M9 3l5 5-5 5" stroke-width="1.500"/></symbol>
<symbol id="lofc" viewBox="0 0 24 22"><path d="M8 14L12.500 2 17 14M9.500 10h6" stroke-width="2"/><path d="M0 16h24v6H0z" fill="#c9211e" stroke="none"/></symbol>
<symbol id="lofl" viewBox="0 0 24 22"><path d="M3 13V4h6" stroke="#0063b1" stroke-width="3"/><path d="M7.500 6l9-2 2 8-9 3z" fill="#fff"/><path d="M13 6l3-6 1 6"/><path d="M0 16h24v6H0z" fill="#ff0" stroke="none"/></symbol>
<symbol id="loal" viewBox="0 0 22 22"><path d="M2 1.500h18M2 5.500h11M2 9.500h18M2 13.500h11M2 17.500h18M2 20.500h11"/></symbol>
<symbol id="loac" viewBox="0 0 22 22"><path d="M2 1.500h18M5 5.500h12M2 9.500h18M5 13.500h12M2 17.500h18M5 20.500h12"/></symbol>
<symbol id="loar" viewBox="0 0 22 22"><path d="M2 1.500h18M9 5.500h11M2 9.500h18M9 13.500h11M2 17.500h18M9 20.500h11"/></symbol>
<symbol id="lovt" viewBox="0 0 22 22"><path d="M2 1.500h18M2 5.500h11M2 9.500h18"/><path d="M10.500 21v-8M7 16l3.500-3.500L14 16" stroke="#1e8bcd"/></symbol>
<symbol id="lovm" viewBox="0 0 22 22"><path d="M2 9.500h18M2 12.500h12"/><path d="M11 0v7M7.500 4L11 7.500 14.500 4M11 22v-7M7.500 18l3.500-3.500 3.500 3.500" stroke="#1e8bcd"/></symbol>
<symbol id="lovb" viewBox="0 0 22 22"><path d="M2 13.500h18M2 17.500h11M2 20.500h18"/><path d="M10.500 1v9M7 7l3.500 3.500L14 7" stroke="#1e8bcd"/></symbol>
<symbol id="lowrap" viewBox="0 0 22 22"><path d="M2 1.500h18M2 5.500h11M2 9.500h18M2 13.500h5M2 17.500h9M2 20.500h18"/><path d="M10 12c5-2 9 0 9 6M15.500 15l3.500 3.500 3-3.500" stroke="#1e8bcd"/></symbol>
<symbol id="lom1" viewBox="0 0 22 22"><path d="M1.500 1.500h19v19h-19z" fill="#d6d6d6"/><path d="M1 6.500h20M1 15.500h20M8 1v5M14 1v5M8 16v5M14 16v5M4 11h5M13 11h5"/></symbol>
<symbol id="lom2" viewBox="0 0 22 22"><path d="M1.500 1.500h19v19h-19z" fill="#d6d6d6"/><path d="M1 6.500h20M1 15.500h20M8 1v5M14 1v5M8 16v5M14 16v5"/></symbol>
<symbol id="lom3" viewBox="0 0 22 22"><path d="M1.500 1.500h19v19h-19z" fill="#d6d6d6"/><path d="M1 6.500h20M1 15.500h4M8 1v20M14 1v20M5 6v15"/></symbol>
<symbol id="locash" viewBox="0 0 24 22"><path d="M12 16H1.500V5.500h21V10"/><circle cx="11" cy="11" r="2.500" fill="currentColor"/><path d="M10 17h5v3.500h-5zM14 14h4v6.500h-4zM18 12h4v8.500h-4z" fill="#ddd"/><path d="M14 16.500h8M14 18.500h8"/></symbol>
<symbol id="loprop" viewBox="0 0 22 22"><path d="M1.500 2.500h19v18h-19z" fill="#fff"/><path d="M1 2h20v3H1z" fill="#777" stroke="none"/><path d="M5 10.500h12M5 14.500h12"/><path d="M12 9h3v3h-3zM8 13h3v3H8z" fill="#1e8bcd" stroke="none"/></symbol>
<symbol id="lostyle" viewBox="0 0 22 22"><path d="M2 16L8 1l4 12M4 11h8" stroke-width="2"/><path d="M21.500 6l-8 8 2 2 6-8z" fill="#fff"/><path d="M7 20c2 0 1-4 5-4l2 2c-1 3-4 3-7 2z" fill="#83beec" stroke="#0063b1"/></symbol>
<symbol id="logal" viewBox="0 0 24 22"><path d="M.5 18.500v-17h6l2 2h11v4" fill="#fff" stroke="#ed8733"/><path d="M.5 18.500l4-12h19l-3 12z" fill="#f9db8f" stroke="#ed8733"/><path d="M8.500 8.500h13v12h-13z" fill="#fff"/><path d="M9 19l4-4 2 2 3-3 3 4v2H9z" fill="#83beec" stroke="#0063b1"/><circle cx="12" cy="12" r="1.500" fill="#ed8733" stroke="none"/></symbol>
<symbol id="lonav" viewBox="0 0 22 22"><circle cx="11" cy="11" r="9.500" fill="#fff"/><path d="M16 6l-2 7-8 3 2-7z" fill="#1e8bcd" stroke="none"/><circle cx="11" cy="11" r="1.500" fill="#fff" stroke="none"/></symbol>
<symbol id="loins" viewBox="0 0 16 16"><path d="M.5 5.500h9v5h-9z" stroke="#1e8bcd"/><path d="M13.500 2v12M11.500 1.500h4M11.500 14.500h4"/></symbol>
</defs>
</svg>

<main class="desk">

<!-- Excel -->
<section class="win xl" aria-label="Excel">
  <header class="xl-title">
    <button aria-label="Speichern"><svg class="bold"><use href="#save"/></svg></button><button aria-label="Rückgängig"><svg class="bold"><use href="#undo"/></svg></button><svg class="c"><use href="#chev"/></svg><button class="dim" aria-label="Wiederholen"><svg class="bold"><use href="#redo"/></svg></button><svg class="c dim"><use href="#chev"/></svg><button aria-label="Anpassen"><svg class="c"><use href="#custom"/></svg></button>
    <span>tf78582910_win322 &nbsp;- &nbsp;Excel (Nicht lizenziertes Produkt)</span>
    <button class="signin">Anmelden</button>
    <button aria-label="Menüband"><svg><use href="#ribbon"/></svg></button><button aria-label="Minimieren"><svg><use href="#min"/></svg></button><button aria-label="Maximieren"><svg><use href="#max"/></svg></button><button aria-label="Schließen"><svg><use href="#x"/></svg></button>
  </header>
  <nav class="xl-tabs">
    <button>Datei</button><button class="on">Start</button><button>Einfügen</button><button>Seitenlayout</button><button>Formeln</button><button>Daten</button><button>Überprüfen</button><button>Ansicht</button><button>Hilfe</button><svg class="bulb"><use href="#bulb"/></svg><button>Was möchten Sie tun?</button><button class="share"><svg><use href="#share"/></svg>Teilen</button>
  </nav>
  <div class="xl-ribbon">
    <div class="g g1">
      <div class="pair">
        <button class="big dim"><svg><use href="#clip"/></svg><span>Einfügen</span><svg class="c"><use href="#chev"/></svg></button>
        <div>
          <div class="r"><button aria-label="Ausschneiden"><svg><use href="#cut"/></svg></button></div>
          <div class="r"><button aria-label="Kopieren"><svg><use href="#copy"/></svg></button><svg class="c"><use href="#chev"/></svg></div>
          <div class="r"><button aria-label="Format übertragen"><svg><use href="#brush"/></svg></button></div>
        </div>
      </div>
      <div class="lab"><span>Zwischenablage</span><svg class="la"><use href="#launch"/></svg></div>
    </div>
    <div class="g g2">
      <div class="r r1"><select aria-label="Schriftart"><option>Corbel</option></select><select aria-label="Schriftgrad"><option>11</option></select></div>
      <div class="r r2"><button class="t"><b>F</b></button><button class="t"><b><i>K</i></b></button><button class="t"><b><u>U</u></b></button><svg class="c"><use href="#chev"/></svg><hr><button aria-label="Größer"><svg><use href="#fup"/></svg></button><button aria-label="Kleiner"><svg><use href="#fdn"/></svg></button></div>
      <div class="r r3"><button aria-label="Rahmen"><svg><use href="#xborder"/></svg></button><svg class="c"><use href="#chev"/></svg><hr><button aria-label="Füllfarbe"><svg><use href="#fill"/></svg></button><svg class="c"><use href="#chev"/></svg><button aria-label="Schriftfarbe"><svg><use href="#fcol"/></svg></button><svg class="c"><use href="#chev"/></svg></div>
      <div class="lab"><span>Schriftart</span><svg class="la"><use href="#launch"/></svg></div>
    </div>
    <div class="g g3">
      <div class="r r1"><button aria-label="Oben"><svg><use href="#vt"/></svg></button><button class="act" aria-label="Mitte"><svg><use href="#vm"/></svg></button><button aria-label="Unten"><svg><use href="#vb"/></svg></button><button aria-label="Umbruch"><svg><use href="#wrap"/></svg></button></div>
      <div class="r r2"><button aria-label="Links"><svg><use href="#al"/></svg></button><button aria-label="Zentriert"><svg><use href="#ac"/></svg></button><button aria-label="Rechts"><svg><use href="#ar"/></svg></button><button aria-label="Verbinden"><svg><use href="#merge"/></svg></button><svg class="c"><use href="#chev"/></svg></div>
      <div class="r r3"><button aria-label="Einzug verkleinern"><svg><use href="#outd"/></svg></button><button aria-label="Einzug vergrößern"><svg><use href="#ind"/></svg></button><hr><button aria-label="Ausrichtung"><svg><use href="#orient"/></svg></button><svg class="c"><use href="#chev"/></svg></div>
      <div class="lab"><span>Ausrichtung</span><svg class="la"><use href="#launch"/></svg></div>
    </div>
    <div class="g g4">
      <div class="r r1"><select aria-label="Zahlenformat"><option>Standard</option></select></div>
      <div class="r r2"><button aria-label="Währung"><svg><use href="#cash"/></svg></button><svg class="c"><use href="#chev"/></svg><button class="pc">%</button><button class="zz">000</button></div>
      <div class="r r3"><button aria-label="Dezimale hinzufügen"><svg><use href="#dinc"/></svg></button><button aria-label="Dezimale entfernen"><svg><use href="#ddec"/></svg></button></div>
      <div class="lab"><span>Zahl</span><svg class="la"><use href="#launch"/></svg></div>
    </div>
    <div class="g g5">
      <button><svg><use href="#cond"/></svg>Bedingte Formatierung<svg class="c"><use href="#chev"/></svg></button>
      <button><svg><use href="#tblf"/></svg>Als Tabelle formatieren<svg class="c"><use href="#chev"/></svg></button>
      <button><svg><use href="#cellst"/></svg>Zellenformatvorlagen<svg class="c"><use href="#chev"/></svg></button>
      <div class="lab"><span>Formatvorlagen</span></div>
    </div>
    <div class="g g6">
      <button><svg><use href="#cins"/></svg>Einfügen<svg class="c"><use href="#chev"/></svg></button>
      <button><svg><use href="#cdel"/></svg>Löschen<svg class="c"><use href="#chev"/></svg></button>
      <button><svg><use href="#cfmt"/></svg>Format<svg class="c"><use href="#chev"/></svg></button>
      <div class="lab"><span>Zellen</span></div>
    </div>
    <div class="g g7">
      <div class="r"><button aria-label="Summe"><svg><use href="#sum"/></svg></button><svg class="c"><use href="#chev"/></svg><button aria-label="Sortieren"><svg><use href="#azf"/></svg></button><svg class="c"><use href="#chev"/></svg></div>
      <div class="r"><button aria-label="Ausfüllen"><svg><use href="#fdown"/></svg></button><svg class="c"><use href="#chev"/></svg><button aria-label="Suchen"><svg><use href="#find"/></svg></button><svg class="c"><use href="#chev"/></svg></div>
      <div class="r"><button aria-label="Löschen"><svg><use href="#eras"/></svg></button><svg class="c"><use href="#chev"/></svg></div>
      <div class="lab"><span>Bearbeiten</span></div>
    </div>
    <button class="collapse" aria-label="Menüband reduzieren"><svg class="s12 flip"><use href="#chev"/></svg></button>
  </div>
  <div class="xl-fx">
    <input class="name" aria-label="Namenfeld" value="K25"><svg class="dots"><use href="#dots"/></svg>
    <div class="fxb"><button aria-label="Abbrechen" class="dim"><svg class="bold"><use href="#x"/></svg></button><button aria-label="Eingeben" class="dim"><svg><use href="#check"/></svg></button><button class="fx">fx</button></div>
    <input class="form" aria-label="Bearbeitungsleiste">
  </div>
  <div class="xl-grid">
    <div class="corner"></div>
    <div class="cols"><span>A</span><span>B</span><span>C</span><span>D</span><span>E</span><span>F</span><span>G</span><span>H</span><span>I</span><span>J</span><span class="sel">K</span><span>L</span><span>M</span><span>N</span><span>O</span></div>
    <div class="vs"><button aria-label="Nach oben"><svg class="c"><use href="#up"/></svg></button><i></i><button aria-label="Nach unten"><svg class="c"><use href="#tri"/></svg></button></div>
    <div class="rows"><span>13</span><span>14</span><span>15</span><span>16</span><span>17</span><span>18</span><span>19</span><span>20</span><span>21</span><span>22</span><span>23</span><span>24</span></div>
    <div class="sheet">
      <div class="chart">
        <div><b>Wohnen</b><i class="k2" style="width:334px"></i>3 €</div>
        <div><b>Transport</b><i class="k3" style="width:170px"></i>1 €</div>
        <div><b>Essen</b><i class="k4" style="width:163px"></i>1 €</div>
        <div><b>Versicherungen</b><i class="k5" style="width:112px"></i>1 €</div>
        <div><b>Unterhaltung</b><i class="k6" style="width:45px"></i>0 €</div>
        <div><b>Steuern</b><i class="k7" style="width:38px"></i>0 €</div>
        <div><b>Spareinlagen</b><i class="k8" style="width:25px"></i>0 €</div>
        <div><b>Kredite</b><i class="k9" style="width:25px"></i>0 €</div>
        <div><b>Persönlicher Bedarf</b><i class="k10" style="width:18px"></i>0 €</div>
        <div><b>Kinder</b><i class="k11" style="width:18px"></i>0 €</div>
        <div><b>Geschenke und Spenden</b><i class="k11" style="width:16px"></i>0 €</div>
        <div><b>Haustiere</b><i class="k13" style="width:13px"></i>0 €</div>
      </div>
    </div>
  </div>
  <div class="xl-sheets">
    <button class="dim2" aria-label="Zurück"><svg class="c"><use href="#lt"/></svg></button><button aria-label="Weiter"><svg class="c"><use href="#rt"/></svg></button>
    <button class="on">Budgetübersicht</button><button class="tab">Budgetzusammenfassung</button><button>Monatliche Au &nbsp;...</button>
    <button aria-label="Neues Blatt"><svg><use href="#plusc"/></svg></button><svg class="dots"><use href="#dots"/></svg>
    <div class="hs"><button aria-label="Nach links"><svg class="c"><use href="#lt"/></svg></button><i></i><button aria-label="Nach rechts"><svg class="c"><use href="#rt"/></svg></button></div>
  </div>
  <footer class="xl-status"><span>Bereit</span><button class="act" aria-label="Normal"><svg><use href="#normal"/></svg></button><button aria-label="Seitenlayout"><svg><use href="#page"/></svg></button><button aria-label="Umbruchvorschau"><svg><use href="#brk"/></svg></button><button>−</button><input type="range" min="0" max="100" value="36" aria-label="Zoom"><button>+</button><span>73 %</span></footer>
</section>

<!-- ONLYOFFICE -->
<section class="win oo" aria-label="ONLYOFFICE">
  <header class="oo-title">
    <svg><use href="#oologo"/></svg><strong>ONLYOFFICE</strong><hr><svg><use href="#oodoc"/></svg><button>Dokument1.docx</button>
    <div class="doc"><svg><use href="#oosheet"/></svg><span>tf78582910_wi...</span><button aria-label="Tab schließen"><svg class="s12"><use href="#x"/></svg></button></div><span></span>
    <button aria-label="Minimieren"><svg><use href="#min"/></svg></button><button aria-label="Maximieren"><svg><use href="#max"/></svg></button><button aria-label="Schließen"><svg><use href="#x"/></svg></button>
  </header>
  <div class="oo-quick"><button class="dim" aria-label="Speichern"><svg class="s14"><use href="#save"/></svg></button><button aria-label="Drucken"><svg><use href="#print"/></svg></button><button class="dim" aria-label="Rückgängig"><svg><use href="#ooundo"/></svg></button><button class="dim" aria-label="Wiederholen"><svg><use href="#ooredo"/></svg></button><span>tf78582910_win32.xltx</span><b>user</b></div>
  <nav class="oo-tabs"><button>Datei</button><button class="on">Startseite</button><button>Einfügen</button><button>Layout</button><button>Formel</button><button>Daten</button><button>Pivot-Tabelle</button><button>Zusammenarbeit</button><button>Schutz</button><button>Tabellenansicht</button><button>Plugins</button><button class="ico push" aria-label="Dateispeicherort"><svg><use href="#folder"/></svg></button><button class="ico" aria-label="Menü"><svg><use href="#menu"/></svg></button></nav>
  <div class="oo-tools">
    <div class="g g1"><div class="r"><button aria-label="Kopieren"><svg><use href="#oocopy"/></svg></button></div><div class="r"><button aria-label="Einfügen"><svg><use href="#oopaste"/></svg></button></div></div>
    <div class="g g2">
      <div class="r r1"><select aria-label="Schriftart"><option>Franklin Gothic Book</option></select><select aria-label="Schriftgrad"><option>28</option></select><button aria-label="Größer"><svg><use href="#oofup"/></svg></button><button aria-label="Kleiner"><svg><use href="#oofdn"/></svg></button></div>
      <div class="r r2"><button class="t"><b>B</b></button><button class="t se"><i>I</i></button><button class="t"><u>U</u></button><button aria-label="Durchgestrichen"><svg><use href="#strike"/></svg></button><button aria-label="Tiefgestellt"><svg><use href="#asub"/></svg></button><svg class="c"><use href="#chev"/></svg><button aria-label="Schriftfarbe"><svg><use href="#ooa"/></svg></button><svg class="c"><use href="#chev"/></svg><button aria-label="Füllfarbe"><svg><use href="#oofill"/></svg></button><svg class="c"><use href="#chev"/></svg><button aria-label="Rahmen"><svg><use href="#grid4"/></svg></button><svg class="c"><use href="#chev"/></svg></div>
    </div>
    <div class="g g3">
      <div class="r r1"><button aria-label="Oben"><svg><use href="#oovt"/></svg></button><button class="act" aria-label="Mitte"><svg><use href="#oovm"/></svg></button><button aria-label="Unten"><svg><use href="#oovb"/></svg></button><button aria-label="Umbruch"><svg><use href="#oowrap"/></svg></button><button aria-label="Ausrichtung"><svg class="s14"><use href="#orient"/></svg></button><svg class="c"><use href="#chev"/></svg></div>
      <div class="r r2"><button aria-label="Links"><svg><use href="#al"/></svg></button><button aria-label="Zentriert"><svg><use href="#ac"/></svg></button><button aria-label="Rechts"><svg><use href="#ar"/></svg></button><button aria-label="Blocksatz"><svg><use href="#aj"/></svg></button><button aria-label="Verbinden"><svg><use href="#oomerge"/></svg></button><svg class="c"><use href="#chev"/></svg></div>
    </div>
    <div class="g g4"><div class="r"><button aria-label="Summe"><svg><use href="#oosum"/></svg></button><svg class="c"><use href="#chev"/></svg></div><div class="r"><button aria-label="Namen"><svg><use href="#ootag"/></svg></button><svg class="c"><use href="#chev"/></svg></div></div>
    <div class="g g5"><div class="r"><button aria-label="Aufsteigend"><svg><use href="#ooaz"/></svg></button><button aria-label="Absteigend"><svg><use href="#ooza"/></svg></button></div><div class="r"><button aria-label="Filter"><svg><use href="#filt"/></svg></button><button class="dim" aria-label="Filter löschen"><svg><use href="#filtx"/></svg></button></div></div>
    <div class="g g6"><div class="r r1"><select aria-label="Zahlenformat"><option>Allgemein</option></select></div><div class="r r2"><button class="t">%</button><button aria-label="Währung"><svg><use href="#oocash"/></svg></button><svg class="c"><use href="#chev"/></svg><button aria-label="Weniger Dezimalen"><svg><use href="#oodd"/></svg></button><button aria-label="Mehr Dezimalen"><svg><use href="#oodi"/></svg></button></div></div>
    <div class="g g4 g7"><div class="r"><button aria-label="Zellen einfügen"><svg><use href="#ooins"/></svg></button><svg class="c"><use href="#chev"/></svg></div><div class="r"><button aria-label="Zellen löschen"><svg><use href="#oodel"/></svg></button><svg class="c"><use href="#chev"/></svg></div></div>
    <div class="g g8"><div class="r"><button aria-label="Löschen"><svg><use href="#ooeras"/></svg></button><svg class="c"><use href="#chev"/></svg><button aria-label="Bedingte Formatierung"><svg><use href="#oocond"/></svg></button><svg class="c"><use href="#chev"/></svg></div><div class="r"><button aria-label="Format übertragen"><svg><use href="#oobrush"/></svg></button><span></span><button aria-label="Tabelle"><svg><use href="#ootab"/></svg></button><svg class="c"><use href="#chev"/></svg></div></div>
    <div class="style"><button>Normal</button></div>
  </div>
  <div class="oo-body">
    <div class="rail"><button aria-label="Suchen"><svg><use href="#search"/></svg></button><button aria-label="Kommentare"><svg><use href="#comment"/></svg></button><button aria-label="Rechtschreibung"><svg><use href="#spell"/></svg></button><button aria-label="Feedback"><svg><use href="#horn"/></svg></button></div>
    <div class="mid">
      <div class="fxr"><input class="name" aria-label="Namenfeld" value="A1"><button class="fx">fx</button><input class="form" aria-label="Formel"></div>
      <div class="grid">
        <div class="corner"></div>
        <div class="cols"><span class="sel">A</span><span>B</span><span>C</span><span>D</span><span>E</span><span>F</span><span>G</span><span>H</span><span>I</span><span>J</span></div>
        <div class="vs"><button aria-label="Nach oben"><svg class="c"><use href="#up"/></svg></button><i></i><button aria-label="Nach unten"><svg class="c"><use href="#tri"/></svg></button></div>
        <div class="rows"><span>13</span><span>14</span><span>15</span><span>16</span><span>17</span><span>18</span><span>19</span><span>20</span><span>21</span><span>22</span><span>23</span><span>24</span><span>25</span><span>26</span></div>
        <div class="sheet">
          <div class="chart">
            <div><b>Grand Total</b><i class="k1" style="width:295px"></i>7.860 €</div>
            <div><b>Wohnen</b><i class="k2" style="width:101px"></i>2.702 €</div>
            <div><b>Transport</b><i class="k3" style="width:51px"></i>1.375 €</div>
            <div><b>Essen</b><i class="k4" style="width:48px"></i>1.320 €</div>
            <div><b>Versicherungen</b><i class="k5" style="width:33px"></i>900 €</div>
            <div><b>Unterhaltung</b><i class="k6" style="width:12px"></i>358 €</div>
            <div><b>Steuern</b><i class="k7" style="width:10px"></i>300 €</div>
            <div><b>Spareinlagen</b><i class="k8" style="width:6px"></i>200 €</div>
            <div><b>Kredite</b><i class="k9" style="width:6px"></i>200 €</div>
            <div><b>Persönlicher Bedarf</b><i class="k10" style="width:4px"></i>140 €</div>
            <div><b>Kinder</b><i class="k11" style="width:4px"></i>140 €</div>
            <div><b>Geschenke und Spenden</b><i class="k11" style="width:3px"></i>125 €</div>
            <div><b>Haustiere</b><i class="k13" style="width:2px"></i>100 €</div>
          </div>
          <div class="axis"><span>0 €</span><span>2 €</span><span>4 €</span><span>6 €</span><span>8 €</span><span>10 €</span></div>
        </div>
      </div>
      <div class="hs"><button aria-label="Nach links"><svg class="c"><use href="#lt"/></svg></button><i></i><button aria-label="Nach rechts"><svg class="c"><use href="#rt"/></svg></button></div>
    </div>
    <aside class="panel">
      <label for="oofillsel">Ausfüllen</label>
      <select id="oofillsel"><option>Ohne Füllung</option></select>
      <hr>
      <h2>Stil des Rahmens</h2>
      <div class="line"><button class="stroke" aria-label="Linienart"><i></i><svg class="c"><use href="#chev"/></svg></button><span>Farbe</span><button class="color" aria-label="Farbe"><i></i><svg class="c"><use href="#chev"/></svg></button></div>
      <p>Wählen Sie Rahmen, die Sie ändern möchten, indem Sie den oben ausgewählten Stil anwenden</p>
      <div class="borders">
        <button aria-label="Alle"><svg><use href="#ball"/></svg></button><button aria-label="Keine"><svg><use href="#bno"/></svg></button><button aria-label="Innen"><svg><use href="#bno"/><path d="M6.500 .5v12M.5 6.500h12"/></svg></button><button aria-label="Außen"><svg><use href="#bno"/><path d="M.5 .5h12v12H.5z"/></svg></button><button aria-label="Diagonal aufwärts"><svg><use href="#bno"/><path d="M.5 12.500l12-12"/></svg></button><button aria-label="Diagonal abwärts"><svg><use href="#bno"/><path d="M.5 .5l12 12"/></svg></button>
        <button aria-label="Linke Linie"><svg><use href="#bno"/><path d="M.5 0v13"/></svg></button><button aria-label="Vertikal innen"><svg><use href="#bno"/><path d="M6.500 0v13"/></svg></button><button aria-label="Rechte Linie"><svg><use href="#bno"/><path d="M12.500 0v13"/></svg></button><button aria-label="Obere Linie"><svg><use href="#bno"/><path d="M0 .5h13"/></svg></button><button aria-label="Horizontal innen"><svg><use href="#bno"/><path d="M0 6.500h13"/></svg></button><button aria-label="Untere Linie"><svg><use href="#bno"/><path d="M0 12.500h13"/></svg></button>
      </div>
      <hr>
      <label for="ooind">Einzug</label>
      <input id="ooind" class="spin" value="0">
      <h2 class="ta">Textausrichtung</h2>
      <div class="angle"><label for="ooang">Winkel</label><input id="ooang" class="spin" value="0 °"></div>
    </aside>
    <div class="rail2"><button class="act" aria-label="Zelle"><svg><use href="#oocell"/></svg></button><button aria-label="Tabelle"><svg><use href="#ootab"/></svg></button><button aria-label="Form"><svg><use href="#shape"/></svg></button><button aria-label="Bild"><svg><use href="#pic"/></svg></button><button aria-label="Diagramm"><svg><use href="#chart"/></svg></button><button aria-label="Absatz"><svg><use href="#para"/></svg></button><button aria-label="TextArt"><svg><use href="#ta"/></svg></button><button aria-label="Pivot"><svg><use href="#pivot"/></svg></button><button aria-label="Datenschnitt"><svg><use href="#slicer"/></svg></button></div>
  </div>
  <footer class="oo-foot">
    <div class="nav"><button aria-label="Erstes"><svg><use href="#first"/></svg></button><button aria-label="Voriges"><svg><use href="#prev"/></svg></button><button aria-label="Nächstes"><svg><use href="#next"/></svg></button><button aria-label="Letztes"><svg><use href="#last"/></svg></button></div>
    <div class="add"><button aria-label="Neu"><svg><use href="#plus"/></svg></button><button aria-label="Liste"><svg class="s14"><use href="#aj"/></svg></button></div>
    <button class="tab on">Budgetübersicht</button><button class="tab t2">Budgetzusammenfassung</button><button class="tab t3">Monatliche Ausgaben</button><button class="tab t4">Zusätzliche Daten</button>
    <div class="zoom"><button aria-label="Verkleinern"><svg><use href="#min"/></svg></button><b>Zoom 70%</b><button aria-label="Vergrößern"><svg><use href="#plus"/></svg></button></div>
  </footer>
</section>

<!-- PlanMaker -->
<section class="win pm" aria-label="PlanMaker">
  <header class="pm-title"><svg><use href="#pmlogo"/></svg><span>Unbenannt 1 - PlanMaker</span><button aria-label="Minimieren"><svg class="s14"><use href="#min"/></svg></button><button aria-label="Maximieren"><svg class="s14"><use href="#max"/></svg></button><button aria-label="Schließen"><svg class="s14"><use href="#x"/></svg></button></header>
  <nav class="pm-nav"><div class="pm-tabs"><button>Datei</button><button class="on">Start</button><button>Einfügen</button><button>Layout</button><button>Formeln</button><button>Daten</button><button>Überprüfen</button><button>Ansicht</button></div><div class="help"><button aria-label="Shop"><svg class="s14"><use href="#cart"/></svg></button><button>?</button><button aria-label="Reduzieren"><svg class="c flip"><use href="#chev"/></svg></button></div></nav>
  <div class="pm-ribbon">
    <div class="g g1"><div class="pair"><button class="big"><svg class="s28"><use href="#pmclip"/></svg><svg class="c"><use href="#tri"/></svg></button><div><button aria-label="Ausschneiden"><svg class="s14"><use href="#cut"/></svg></button><button aria-label="Kopieren"><svg class="s14"><use href="#pmcopy"/></svg></button><button aria-label="Format übertragen"><svg class="s14"><use href="#brush"/></svg></button></div></div><div class="lab">Bearbeiten</div></div>
    <div class="g g2">
      <div class="r r1"><select aria-label="Schriftart"><option>Corbel</option></select></div>
      <div class="r r2"><select aria-label="Schriftgrad"><option>11</option></select><button class="t"><b>F</b></button><button class="t"><b><i>K</i></b></button><button class="t"><b><u>U</u></b></button><svg class="c"><use href="#tri"/></svg></div>
      <div class="r r3"><button aria-label="Schriftfarbe"><svg><use href="#fcol"/></svg></button><svg class="c"><use href="#tri"/></svg><hr><button aria-label="Größer"><svg class="s14"><use href="#fup"/></svg></button><button aria-label="Kleiner"><svg class="s14"><use href="#fdn"/></svg></button></div>
      <div class="lab cr">Zeichen</div>
    </div>
    <div class="g g3">
      <div class="r r1"><button aria-label="Oben"><svg class="s12"><use href="#vt"/></svg></button><button class="act" aria-label="Mitte"><svg class="s12"><use href="#vm"/></svg></button><button aria-label="Unten"><svg class="s12"><use href="#vb"/></svg></button><button aria-label="Verteilt"><svg class="s12"><use href="#ac"/></svg></button></div>
      <div class="r r2"><button aria-label="Rahmen"><svg class="s14"><use href="#pmborder"/></svg></button><svg class="c"><use href="#tri"/></svg><button aria-label="Umbruch"><svg><use href="#pmwrap"/></svg></button><button aria-label="Verbinden"><svg><use href="#pmmerge"/></svg></button><svg class="c"><use href="#tri"/></svg></div>
      <div class="r r3"><button class="act" aria-label="Textrichtung"><svg><use href="#pmt1"/></svg></button><button aria-label="Links"><svg class="s12"><use href="#al"/></svg></button><button aria-label="Zentriert"><svg class="s12"><use href="#ac"/></svg></button><button aria-label="Rechts"><svg class="s12"><use href="#ar"/></svg></button><button aria-label="Blocksatz"><svg class="s12"><use href="#aj"/></svg></button></div>
      <div class="lab cr">Ausrichtung</div>
    </div>
    <div class="g g4">
      <div class="r r1"><select aria-label="Zahlenformat"><option>Standard</option></select></div>
      <div class="r r2"><button class="t">%</button><button aria-label="Währung"><svg><use href="#pmcash"/></svg></button></div>
      <div class="r r3"><button aria-label="Mehr Dezimalen"><svg class="s14"><use href="#dinc"/></svg></button><button aria-label="Weniger Dezimalen"><svg class="s14"><use href="#ddec"/></svg></button></div>
      <div class="lab cr">Zahl</div>
    </div>
    <div class="g g5">
      <div class="r r1"><svg><use href="#pmfill"/></svg><button>Schattierung</button><svg class="c"><use href="#tri"/></svg><svg><use href="#pmcond"/></svg><button>Bedingte Formatierung</button><svg class="c"><use href="#tri"/></svg></div>
      <div class="r r2"><svg><use href="#pmgrid"/></svg><button>Umrandung</button><svg class="c"><use href="#tri"/></svg><svg><use href="#pmstyle"/></svg><button>Zellenvorlagen</button><svg class="c"><use href="#tri"/></svg></div>
      <div class="lab">Format</div>
    </div>
    <div class="g g6"><div class="r"><button aria-label="Einfügen"><svg><use href="#pmins"/></svg></button><svg class="c"><use href="#tri"/></svg></div><div class="r"><button aria-label="Löschen"><svg><use href="#pmdel"/></svg></button><svg class="c"><use href="#tri"/></svg></div><div class="r"><button aria-label="Ausblenden"><svg><use href="#pmhide"/></svg></button><svg class="c"><use href="#tri"/></svg></div><div class="lab">Zellen</div></div>
    <div class="g g7"><div class="pair"><button class="big"><svg class="s24"><use href="#pmaz"/></svg><svg class="c"><use href="#tri"/></svg></button><div><div class="r"><button class="sg">Σ</button><svg class="c"><use href="#tri"/></svg></div><div class="r"><button aria-label="Füllen"><svg><use href="#pmfilld"/></svg></button><svg class="c"><use href="#tri"/></svg></div><div class="r"><button aria-label="Löschen"><svg><use href="#pmeras"/></svg></button><svg class="c"><use href="#tri"/></svg></div></div></div><div class="lab">Inhalte</div></div>
    <div class="g g8"><div class="pair"><button class="big"><svg class="s24"><use href="#pmfind"/></svg></button><div><div class="r"><button aria-label="Ersetzen"><svg><use href="#pmrep"/></svg></button></div><div class="r"><button aria-label="Weitersuchen"><svg class="s14"><use href="#pmfn"/></svg></button></div><div class="r"><button aria-label="Gehe zu"><svg class="s12"><use href="#pmgo"/></svg></button></div></div></div><div class="lab">Suchen</div></div>
    <div class="g g9"><button class="big"><svg class="s24"><use href="#pmsel"/></svg></button><div class="lab">Ausw...</div></div>
    <div class="g rest"><div class="lab"></div></div>
  </div>
  <div class="pm-fx"><input class="name" aria-label="Namenfeld" value="C28"><button class="fx">fx</button><button class="dim" aria-label="Eingeben"><svg class="s12"><use href="#check"/></svg></button><button class="dim" aria-label="Abbrechen"><svg class="s12 bold"><use href="#x"/></svg></button><input class="form" aria-label="Formel"><span>»</span></div>
  <div class="pm-tools"><button aria-label="Liste"><svg><use href="#aj"/></svg></button><hr><button aria-label="Shop"><svg><use href="#cart"/></svg></button><hr><button aria-label="Touch"><svg><use href="#hand"/></svg></button><hr><button aria-label="Neu"><svg><use href="#newdoc"/></svg></button><svg class="c"><use href="#tri"/></svg><button aria-label="Öffnen"><svg><use href="#open"/></svg></button><svg class="c"><use href="#tri"/></svg><hr><button aria-label="Speichern"><svg class="s14"><use href="#pmsave"/></svg></button><hr><button class="dim" aria-label="Rückgängig"><svg class="s14"><use href="#curve"/></svg></button><svg class="c"><use href="#tri"/></svg><button class="dim" aria-label="Wiederholen"><svg class="s14"><use href="#curver"/></svg></button><svg class="c"><use href="#tri"/></svg><button class="dim" aria-label="Erneut"><svg class="s14"><use href="#cycle"/></svg></button><hr><button aria-label="Objektmodus"><svg><use href="#cursor"/></svg></button><span>»</span></div>
  <div class="pm-grid">
    <div class="corner"></div>
    <div class="cols"><span>A</span><span>B</span><span class="sel">C</span><span>D</span><span>E</span><span>F</span><span>G</span><span>H</span><span>I</span><span>J</span><span>K</span><span>L</span><span>M</span><span></span></div>
    <div class="vs"><button aria-label="Nach oben"><svg class="c flip bold"><use href="#chev"/></svg></button><i></i><button aria-label="Nach unten"><svg class="c bold"><use href="#chev"/></svg></button><button aria-label="Voriges Objekt"><svg class="c"><use href="#up"/></svg></button><button class="dot" aria-label="Objektwahl"></button></div>
    <div class="side"><button aria-label="Seitenleiste"><svg class="c"><use href="#lt"/></svg></button></div>
    <div class="rows"><span>14</span><span>15</span><span>16</span><span>17</span><span>18</span><span>19</span><span>20</span><span>21</span><span>22</span><span>23</span><span>24</span><span>25</span></div>
    <div class="sheet">
      <div class="chart">
        <div><b>Gesamtergebnis</b><i class="k1" style="width:330px"></i>7.860 €</div>
        <div><b>Wohnen</b><i class="k2" style="width:113px"></i>2.702 €</div>
        <div><b>Versicherungen</b><i class="k3" style="width:37px"></i>900 €</div>
        <div><b>Unterhaltung</b><i class="k4" style="width:15px"></i>358 €</div>
        <div><b>Transport</b><i class="k5" style="width:57px"></i>1.375 €</div>
        <div><b>Steuern</b><i class="k6" style="width:12px"></i>300 €</div>
        <div><b>Spareinlagen</b><i class="k7" style="width:8px"></i>200 €</div>
        <div><b>Persönlicher Bedarf</b><i class="k8" style="width:5px"></i>140 €</div>
        <div><b>Kredite</b><i class="k9" style="width:8px"></i>200 €</div>
        <div><b>Kinder</b><i class="k10" style="width:5px"></i>140 €</div>
        <div><b>Haustiere</b><i class="k11" style="width:4px"></i>100 €</div>
        <div><b>Geschenke und Spenden</b><i class="k11" style="width:5px"></i>125 €</div>
        <div><b>Essen</b><i class="k13" style="width:55px"></i>1.320 €</div>
      </div>
      <div class="axis"><span>0 €</span><span>2.000 €</span><span>4.000 €</span><span>6.000 €</span><span>8.000 €</span><span>10.000 €</span></div>
    </div>
  </div>
  <div class="pm-sheets"><button aria-label="Erstes"><svg class="s12"><use href="#hf"/></svg></button><button aria-label="Voriges"><svg class="s12"><use href="#hm"/></svg></button><button aria-label="Nächstes"><svg class="s12"><use href="#hp"/></svg></button><button aria-label="Letztes"><svg class="s12"><use href="#hl"/></svg></button><span></span><button class="on">Budgetübersicht</button><button>Budgetzusammenfassung</button><button>Monatliche Ausgaben</button><button class="z">Z</button>
    <div class="hs"><button>‹</button><i></i><button>›</button></div><button aria-label="Ecke"><svg class="s12"><use href="#cursor"/></svg></button></div>
  <footer class="pm-status"><span></span><hr><svg class="dim"><use href="#refresh"/></svg><span>EINF</span><hr><span>AUTO</span><button>−</button><input type="range" min="0" max="100" value="36" aria-label="Zoom"><button>+</button><span>78%</span><span>»</span></footer>
</section>

<!-- LibreOffice -->
<section class="win lo" aria-label="LibreOffice Calc">
  <div class="lo-head">
    <header class="lo-title"><svg><use href="#lologo"/></svg><span>Unbenannt 2 - LibreOffice Calc</span><button aria-label="Minimieren"><svg><use href="#min"/></svg></button><button aria-label="Maximieren"><svg><use href="#max"/></svg></button><button aria-label="Schließen"><svg><use href="#x"/></svg></button></header>
    <nav class="lo-menu"><button><u>D</u>atei</button><button><u>B</u>earbeiten</button><button><u>A</u>nsicht</button><button><u>E</u>infügen</button><button><u>F</u>ormat</button><button>Format<u>v</u>orlagen</button><button><u>T</u>abelle</button><button>Date<u>n</u></button><button>E<u>x</u>tras</button><button>Fen<u>s</u>ter</button><button><u>H</u>ilfe</button><button aria-label="Dokument schließen"><svg class="s12"><use href="#x"/></svg></button></nav>
    <div class="lo-tb1"><button aria-label="Neu"><svg><use href="#lonew"/></svg></button><svg class="c"><use href="#tri"/></svg><button aria-label="Öffnen"><svg class="w24"><use href="#loopen"/></svg></button><svg class="c"><use href="#tri"/></svg><button aria-label="Speichern"><svg><use href="#losave"/></svg></button><svg class="c"><use href="#tri"/></svg><hr><button aria-label="PDF"><svg><use href="#lopdf"/></svg></button><button aria-label="Drucken"><svg><use href="#loprint"/></svg></button><button aria-label="Vorschau"><svg><use href="#loprev"/></svg></button><hr><button aria-label="Ausschneiden"><svg><use href="#locut"/></svg></button><button aria-label="Kopieren"><svg><use href="#locopy"/></svg></button><button aria-label="Einfügen"><svg><use href="#lopaste"/></svg></button><hr><button aria-label="Format übertragen"><svg><use href="#loclone"/></svg></button><button aria-label="Formatierung löschen"><svg><use href="#loclear"/></svg></button><hr><button class="dim" aria-label="Rückgängig"><svg><use href="#loundo"/></svg></button><svg class="c dim"><use href="#tri"/></svg><button class="dim" aria-label="Wiederholen"><svg><use href="#loredo"/></svg></button><svg class="c dim"><use href="#tri"/></svg><hr><button aria-label="Suchen"><svg><use href="#lofind"/></svg></button><button aria-label="Rechtschreibung"><svg><use href="#loabc"/></svg></button><hr><button aria-label="Zeile"><svg><use href="#lorow"/></svg></button><svg class="c"><use href="#tri"/></svg><button aria-label="Spalte"><svg><use href="#locol"/></svg></button><svg class="c"><use href="#tri"/></svg><hr><button aria-label="Sortieren"><svg><use href="#losort"/></svg></button><button aria-label="Aufsteigend"><svg><use href="#loaz"/></svg></button><button aria-label="Absteigend"><svg><use href="#loza"/></svg></button><button aria-label="AutoFilter"><svg><use href="#lofilt"/></svg></button><hr><button aria-label="Bild"><svg><use href="#loimg"/></svg></button><button aria-label="Diagramm"><svg><use href="#lochart"/></svg></button><button aria-label="Pivot"><svg><use href="#lopivot"/></svg></button><button aria-label="Mehr"><svg class="s14"><use href="#more"/></svg></button></div>
    <div class="lo-tb2"><select aria-label="Schriftart"><option>Franklin Gothic Book</option></select><select aria-label="Schriftgrad"><option>28 pt</option></select><hr><button class="t"><b>F</b></button><button class="t"><i>K</i></button><button class="t un">U</button><svg class="c"><use href="#tri"/></svg><hr><button aria-label="Schriftfarbe"><svg class="w24"><use href="#lofc"/></svg></button><svg class="c"><use href="#tri"/></svg><button aria-label="Hervorhebung"><svg class="w24"><use href="#lofl"/></svg></button><svg class="c"><use href="#tri"/></svg><hr><button aria-label="Links"><svg><use href="#loal"/></svg></button><button aria-label="Zentriert"><svg><use href="#loac"/></svg></button><button aria-label="Rechts"><svg><use href="#loar"/></svg></button><hr><button aria-label="Oben"><svg><use href="#lovt"/></svg></button><button class="act" aria-label="Mitte"><svg><use href="#lovm"/></svg></button><button aria-label="Unten"><svg><use href="#lovb"/></svg></button><hr><button aria-label="Umbruch"><svg><use href="#lowrap"/></svg></button><hr><button class="dim" aria-label="Verbinden"><svg><use href="#lom1"/></svg></button><button class="dim" aria-label="Zusammenführen"><svg><use href="#lom2"/></svg></button><button class="dim" aria-label="Trennen"><svg><use href="#lom3"/></svg></button><hr><button aria-label="Währung"><svg class="w24"><use href="#locash"/></svg></button><svg class="c"><use href="#tri"/></svg><button class="t pct">%</button><button aria-label="Mehr"><svg class="s14"><use href="#more"/></svg></button></div>
  </div>
  <div class="lo-body">
    <div class="main">
      <div class="lo-fx"><input class="name" aria-label="Namenfeld" value="A1"><hr><button class="fx">fx</button><button class="sg" aria-label="Summe"><svg class="s18"><use href="#oosum"/></svg></button><svg class="c"><use href="#tri"/></svg><button class="eq">=</button><input class="form" aria-label="Formel"><button aria-label="Aufklappen"><svg class="s14"><use href="#tri"/></svg></button></div>
      <div class="lo-grid">
        <div class="corner"></div>
        <div class="cols"><span class="sel">A</span><span>B</span><span>C</span><span>D</span><span>E</span><span>F</span><span>G</span><span>H</span><span>I</span><span>J</span></div>
        <div class="vs"><em></em><i></i></div>
        <div class="rows"><span>14</span><span>15</span><span>16</span><span>17</span><span>18</span><span>19</span><span>20</span><span>21</span><span>22</span><span></span></div>
        <div class="sheet">
          <div class="chart">
            <div><b>Summe Ergebnis</b><i class="k1" style="width:456px"></i>7.860 €</div>
            <div><b>Wohnen</b><i class="k2" style="width:156px"></i>2.702 €</div>
            <div><b>Transport</b><i class="k3" style="width:80px"></i>1.375 €</div>
            <div><b>Essen</b><i class="k4" style="width:77px"></i>1.320 €</div>
            <div><b>Versicherungen</b><i class="k5" style="width:52px"></i>900 €</div>
            <div><b>Unterhaltung</b><i class="k6" style="width:21px"></i>358 €</div>
            <div><b>Steuern</b><i class="k7" style="width:17px"></i>300 €</div>
            <div><b>Spareinlagen</b><i class="k8" style="width:12px"></i>200 €</div>
            <div><b>Kredite</b><i class="k9" style="width:12px"></i>200 €</div>
            <div><b>Persönlicher Bedarf</b><i class="k10" style="width:8px"></i>140 €</div>
            <div><b>Kinder</b><i class="k11" style="width:8px"></i>140 €</div>
            <div><b>Geschenke und Spenden</b><i class="k11" style="width:7px"></i>125 €</div>
          </div>
        </div>
      </div>
      <div class="lo-hs"><i></i><em></em></div>
      <div class="lo-sheets"><button aria-label="Erstes"><svg class="s14"><use href="#first"/></svg></button><button aria-label="Voriges"><svg class="s14"><use href="#prev"/></svg></button><button aria-label="Nächstes"><svg class="s14"><use href="#next"/></svg></button><button aria-label="Letztes"><svg class="s14"><use href="#last"/></svg></button><button class="add" aria-label="Neu"><svg><use href="#plus"/></svg></button><button class="on">Budgetübersicht</button><button>Budgetzusammenfassung</button><button>Monatliche Ausgaben</button><button>Zusätzliche Daten</button></div>
    </div>
    <aside class="side"><button class="ham" aria-label="Menü"><svg class="s12"><use href="#menu"/></svg></button><button class="act" aria-label="Eigenschaften"><svg><use href="#loprop"/></svg></button><button aria-label="Vorlagen"><svg><use href="#lostyle"/></svg></button><button aria-label="Galerie"><svg class="w24"><use href="#logal"/></svg></button><button aria-label="Navigator"><svg><use href="#lonav"/></svg></button><button class="fx">fx</button><button class="handle" aria-label="Seitenleiste ausblenden"><svg class="c"><use href="#rt"/></svg></button></aside>
  </div>
  <footer class="lo-status"><span>Tabelle 1 von 4</span><span></span><span>PageStyle_Budgetübersicht</span><span>Deutsch (Deutschland)</span><span></span><span><svg><use href="#loins"/></svg></span><span><svg class="s12"><use href="#save"/></svg></span><span></span><span>Mittelwert: ; Summe: 0</span><div><button class="big">−</button><input type="range" min="0" max="100" value="49" aria-label="Zoom"><button class="big">+</button></div><span>100%</span></footer>
</section>

</main>
</body>
</html>
```
FILE: styles.css
```css
*{box-sizing:border-box}
html,body{margin:0;height:100%}
body{font-family:"Open Sans","Noto Sans",sans-serif;font-size:12px;line-height:16px;background:#222}
.sprite{display:none}
svg{display:block;width:16px;height:16px;fill:none;stroke:currentColor;flex:none;overflow:visible}
svg.c{width:8px;height:8px}
svg.s12{width:12px;height:12px}
svg.s14{width:14px;height:14px}
svg.s18{width:18px;height:18px}
svg.s24{width:24px;height:24px}
svg.s28{width:28px;height:28px}
svg.bold{stroke-width:2}
svg.flip{transform:rotate(180deg)}
button{appearance:none;border:0;background:none;padding:0;margin:0;color:inherit;font:inherit;text-align:left;white-space:nowrap;display:flex;align-items:center}
input,select{appearance:none;border:0;border-radius:0;margin:0;padding:0;font:inherit;color:inherit;min-width:0;outline:0}
hr{border:0;margin:0;width:1px;height:20px;background:#555}
h2,p{margin:0;font:inherit}
span{white-space:nowrap}
.desk{display:grid;grid-template-columns:minmax(0,960fr) minmax(0,959fr);grid-template-rows:minmax(0,515fr) minmax(0,518fr);min-height:100vh;height:100vh}
.win{display:flex;flex-direction:column;min-width:0;min-height:0;overflow:hidden}
.fx{font-family:"Liberation Serif",serif;font-style:italic}
.r{display:grid;align-items:center}
.t{justify-content:center;width:16px}
.cols{display:grid;min-width:0;overflow:hidden}
.cols span{text-align:center;overflow:hidden}
.rows{overflow:hidden}
.rows span{display:block;text-align:center}
.sheet{background:#fff;overflow:hidden;min-width:0;min-height:0;position:relative}
.chart{display:flex;flex-direction:column}
.chart div{display:flex;align-items:center;white-space:nowrap}
.chart b{font-weight:400;text-align:right;flex:none}
.chart i{flex:none}
.k1{background:#70ad47}.k2{background:#669f41}.k3{background:#d5e3cf}.k4{background:#5a8d3c}
.k5{background:#6da945}.k6{background:#548235}.k7{background:#c6d9be}.k8{background:#7eb361}
.k9{background:#b5d0ab}.k10{background:#94c083}.k11{background:#60993e}.k13{background:#a6c798}
.axis{display:flex}
.axis span{text-align:center;flex:none}
input[type=range]{background:linear-gradient(#999,#999) center/100% 1px no-repeat;height:12px;width:100%}
input[type=range]::-webkit-slider-thumb{appearance:none;width:4px;height:10px;background:#e6e6e6}

/* Excel */
.xl{border:1px solid #767676;border-width:1px 0 0 1px;background:#252525;color:#f3f3f3}
.xl-title{height:34px;background:#0a0a0a;display:grid;align-items:center;padding-left:21px;grid-template-columns:29px 20px 19px 20px 22px 204px 1fr 102px 47px 46px 46px 31px}
.xl .dim{color:#6c6c6c}
.xl-title .dim{color:#444}
.xl-title span{font-size:11px}
.signin{background:#fff;color:#222;width:77px;height:19px;justify-content:center;border-radius:1px}
.xl-tabs{height:30px;background:#323130;display:grid;align-items:center;padding:2px 0 0 13px;grid-template-columns:58px 57px 81px 101px 77px 63px 97px 70px 67px 27px 1fr 81px}
.xl-tabs .on{font-weight:600;border-bottom:3px solid #fff;width:30px;height:25px;padding-top:3px}
.xl-tabs .bulb{height:18px}
.xl-tabs .share{width:68px;height:24px;border:1px solid #686868;background:#444342;border-radius:2px;font-weight:600;gap:4px;padding-left:6px}
.share svg{width:14px;height:14px}
.xl-ribbon{height:97px;background:#323130;display:flex;padding-top:4px}
.xl-ribbon .g{display:flex;flex-direction:column;flex:none;background:linear-gradient(#4e4d4c,#4e4d4c) right top/1px 88px no-repeat}
.xl-ribbon .g1{width:106px}.xl-ribbon .g2{width:156px}.xl-ribbon .g3{width:127px}.xl-ribbon .g4{width:101px}
.xl-ribbon .g5{width:178px}.xl-ribbon .g6{width:108px}.xl-ribbon .g7{width:90px}
.xl-ribbon .r{height:24px}
.xl-ribbon .r1{height:23px}
.xl-ribbon .lab{margin-top:auto;display:flex;font-size:11px;line-height:18px;align-items:center}
.xl-ribbon .lab span{flex:1;text-align:center}
.xl-ribbon svg.la{width:9px;height:9px;margin-right:4px}
.xl-ribbon .pair{display:flex}
.xl-ribbon .g1 .r{grid-template-columns:21px 1fr}
.xl-ribbon .big{width:63px;flex-direction:column;align-items:center;padding:2px 0 0 6px}
.xl-ribbon .big svg:first-child{width:32px;height:32px}
.xl-ribbon .big .c{margin-top:4px}
.xl select{background:#373635 url("data:image/svg+xml,%3Csvg xmlns='http://www.w3.org/2000/svg' width='7' height='4'%3E%3Cpath d='M0 0h6L3 3z' fill='%23ddd'/%3E%3C/svg%3E") right 4px center no-repeat;border:1px solid #767574;height:23px;padding-left:2px}
.xl .g2 .r1{padding-left:8px;grid-template-columns:97px 43px}
.xl .g2 .r1 select:first-child{width:95px}
.xl .g2 .r2{padding-left:11px;grid-template-columns:23px 24px 22px 17px 9px 25px 1fr}
.xl .g2 .r3{padding-left:11px;grid-template-columns:21px 17px 8px 21px 18px 21px 1fr}
.xl .g3 .r1{padding-left:11px;grid-template-columns:21px 27px 25px 1fr}
.xl .g3 .r2{padding-left:11px;grid-template-columns:24px 24px 25px 21px 1fr}
.xl .g3 .r3{padding-left:11px;grid-template-columns:24px 23px 8px 19px 1fr}
.xl .g3 .act{width:22px;height:23px;background:#5b5a59;border:1px solid #777;justify-content:center}
.xl .g4 .r1{padding-left:8px;grid-template-columns:85px}
.xl .g4 .r2{padding-left:11px;grid-template-columns:21px 19px 22px 1fr}
.xl .g4 .r3{padding-left:11px;grid-template-columns:24px 1fr}
.xl .pc{font-size:15px}
.xl .zz{font-size:9px}
.xl .g5>button,.xl .g6>button{height:23px;padding-left:11px;gap:3px;font-size:12px}
.xl .g5 .c{margin-left:1px}
.xl .g6 .c{margin-left:6px}
.xl .g7 .r{height:23px;padding-left:11px;grid-template-columns:21px 17px 19px 1fr}
.xl .collapse{margin:auto 8px 2px auto;height:12px}
.xl-fx{height:46px;padding:10px 6px 10px 5px;display:grid;grid-template-columns:102px 30px 113px 1fr}
.xl-fx input,.fxb{background:#373737;border:1px solid #464646;height:26px}
.xl-fx .name{padding-left:6px;background:#373737 url("data:image/svg+xml,%3Csvg xmlns='http://www.w3.org/2000/svg' width='8' height='4'%3E%3Cpath d='M0 0h8L4 4z' fill='%23eee'/%3E%3C/svg%3E") right 6px center no-repeat}
.xl-fx .form{background:#373737 url("data:image/svg+xml,%3Csvg xmlns='http://www.w3.org/2000/svg' width='8' height='5'%3E%3Cpath d='M1 1l3 3 3-3' fill='none' stroke='%23eee' stroke-width='2'/%3E%3C/svg%3E") right 4px center no-repeat}
.xl-fx .dots{width:8px;margin:5px 0 0 11px}
.fxb{width:110px;display:grid;grid-template-columns:36px 37px 1fr;padding-left:10px;align-items:center}
.fxb .fx{font-size:15px;font-weight:700}
.xl-grid{flex:1;min-height:0;display:grid;grid-template-columns:23px 1fr 21px;grid-template-rows:15px 1fr}
.xl .corner{background:linear-gradient(135deg,transparent 50%,#777 50%) right 3px bottom 3px/7px 7px no-repeat;border-right:1px solid #888}
.xl .cols{color:#c4c4c4;border-bottom:1px solid #999;font-size:11px;line-height:14px;grid-template-columns:11px 129px 97px 97px 15px 97px 97px 11px 53px 53px 54px 53px 53px 53px 1fr}
.xl .cols span{border-right:1px solid #555}
.xl .cols .sel{background:#6a6a6a;border-bottom:2px solid #217346}
.xl .rows{color:#c4c4c4;border-right:1px solid #999}
.xl .rows span{height:21px;line-height:22px;padding-top:2px;border-bottom:1px solid #777}
.xl .vs{grid-column:3;grid-row:1/3;padding:2px 4px 0 3px;display:flex;flex-direction:column}
.xl .vs button,.xl .hs button{background:#505050;width:14px;height:14px;justify-content:center;color:#999}
.xl .vs i{height:91px;background:#6a6a6a;border:1px solid #888;margin:103px 0 auto}
.xl .chart{margin-top:20px;font-size:9px;color:#555;background:linear-gradient(#ccc,#ccc) 143px 0/1px 100% no-repeat}
.xl .chart div{height:18px}
.xl .chart b{width:135px;margin-right:9px}
.xl .chart i{height:11px;margin-right:5px}
.xl-sheets{height:28px;border-top:1px solid #aaa;display:grid;align-items:start;padding:0 19px 0 26px;grid-template-columns:28px 46px 125px 182px 132px 33px 21px 1fr}
.xl-sheets>*{height:25px}
.xl-sheets button{justify-content:center}
.xl-sheets>button:nth-child(-n+2){width:9px}
.xl-sheets .dim2{color:#888}
.xl-sheets .on{background:#fff;color:#217346;font-weight:700;border-bottom:2px solid #217346}
.xl-sheets .tab{border-right:1px solid #999}
.xl-sheets .dots{width:8px;height:16px;margin-top:5px}
.xl-sheets>button:nth-child(6){width:16px}
.xl .hs{display:flex;align-items:center}
.xl .hs i{flex:1;height:14px;background:#555;border:1px solid #777;margin-right:23px}
.xl-status{height:22px;background:#323130;border-top:1px solid #444;display:grid;align-items:center;padding-left:7px;font-size:11px;grid-template-columns:1fr 39px 41px 44px 15px 103px 24px 49px}
.xl-status button{justify-content:center;height:21px}
.xl-status button:nth-child(4){justify-content:flex-start;padding-left:12px}
.xl-status button:nth-child(5),.xl-status button:nth-child(7){width:12px;font-size:15px}
.xl-status .act{background:#555;width:37px}

/* ONLYOFFICE */
.oo{background:#404040;color:#d9d9d9;border:1px solid #2a2a2a;border-width:1px 0 0 1px;padding:3px;font-family:"Liberation Sans",sans-serif}
.oo .dim{color:#868686}
.oo-title{height:28px;display:grid;align-items:center;padding-left:13px;grid-template-columns:19px 79px 9px 21px 106px 137px 1fr 41px 41px 28px;font-family:"Open Sans",sans-serif;color:#fff}
.oo-title strong{font-size:11px}
.oo-title hr{height:28px;background:#5a5a5a}
.oo-title>button{color:#ccc;font-size:11px}
.oo-title>button:nth-last-child(-n+3){color:#fff}
.oo .doc{background:#2a2a2a;height:28px;display:flex;align-items:center;gap:7px;padding:0 8px 0 9px;color:#ccc;font-size:11px;min-width:0}
.oo .doc span{flex:1;width:0}
.oo .doc button{color:#fff}
.oo-quick{height:28px;background:#2a2a2a;display:grid;align-items:center;padding-left:12px;grid-template-columns:40px 40px 40px 284px 1fr 34px}
.oo-quick b{font-size:11px}
.oo-tabs{height:28px;background:#2a2a2a;display:flex}
.oo-tabs button{padding:0 12px}
.oo-tabs .on{background:#404040}
.oo-tabs .push{margin-left:auto}
.oo-tools{height:67px;border-bottom:1px solid #222;display:flex;padding-top:10px;font-size:11px}
.oo-tools .g{height:46px;border-right:1px solid #555;flex:none;display:flex;flex-direction:column;gap:4px;padding-left:12px}
.oo-tools .r{height:21px}
.oo-tools .g1{width:41px}
.oo-tools .g2{width:239px;padding-left:10px}
.oo-tools .g3{width:156px}
.oo-tools .g4{width:52px}
.oo-tools .g5{width:72px}
.oo-tools .g6{width:134px;padding-left:10px}
.oo-tools .g8{width:82px;padding-left:11px;border:0}
.oo select,.oo .spin,.oo .stroke,.oo .color{background:#333 url("data:image/svg+xml,%3Csvg xmlns='http://www.w3.org/2000/svg' width='8' height='5'%3E%3Cpath d='M1 1l3 2 3-2' fill='none' stroke='%23ccc'/%3E%3C/svg%3E") right 4px center no-repeat;border:1px solid #666;height:22px;padding-left:3px;border-radius:1px}
.oo .g2 .r1{grid-template-columns:129px 49px 23px 1fr}
.oo .g2 .r1 select:first-child{width:127px}
.oo .g2 .r1 select:nth-child(2){width:45px}
.oo .g2 .r2{padding-left:1px;grid-template-columns:22px 23px 22px 23px 18px 14px 19px 14px 19px 15px 18px 1fr}
.oo .t{font-size:14px}
.oo .se{font-family:"Liberation Serif",serif;font-size:16px}
.oo .g3 .r1{grid-template-columns:24px 28px 26px 26px 19px 1fr}
.oo .g3 .r2{grid-template-columns:26px 26px 26px 26px 19px 1fr}
.oo .g3 .act{width:20px;height:20px;background:#707070;justify-content:center;color:#fff}
.oo .g4 .r{grid-template-columns:19px 1fr}
.oo .g5 .r{grid-template-columns:31px 1fr}
.oo .g6 .r1{grid-template-columns:113px}
.oo .g6 .r2{padding-left:2px;grid-template-columns:31px 19px 13px 30px 1fr}
.oo .g8 .r{grid-template-columns:20px 12px 19px 1fr}
.oo .style{flex:1;border:1px solid #222;border-right-color:#666;height:46px;background:#333;padding-right:5px;display:flex}
.oo .style button{flex:1;background:#fff;border:2px solid #bfbfbf;color:#222;font:14px "Open Sans",sans-serif;padding-left:4px}
.oo-body{flex:1;min-height:0;display:grid;grid-template-columns:40px 1fr 221px 39px}
.oo .rail{border-right:1px solid #222;display:flex;flex-direction:column;gap:22px;padding:22px 0 0 12px}
.oo .mid{display:flex;flex-direction:column;min-width:0;min-height:0;background:#555}
.oo .fxr{height:25px;border-bottom:5px solid #404040;display:grid;grid-template-columns:99px 21px 1fr;background:#222}
.oo .fxr input{background:#333 url("data:image/svg+xml,%3Csvg xmlns='http://www.w3.org/2000/svg' width='8' height='5'%3E%3Cpath d='M1 1l3 2 3-2' fill='none' stroke='%23ccc'/%3E%3C/svg%3E") right 5px center no-repeat;height:19px}
.oo .fxr .name{padding-left:4px}
.oo .fxr .fx{background:#404040;margin:0 1px;height:19px;justify-content:center;font-size:16px}
.oo .grid{flex:1;min-height:0;display:grid;grid-template-columns:20px 1fr 14px;grid-template-rows:15px 1fr}
.oo .corner{background:linear-gradient(135deg,transparent 50%,#bbb 50%) right 3px bottom 3px/7px 7px no-repeat;border-right:1px solid #888}
.oo .cols{color:#fff;font:11px/15px "Open Sans",sans-serif;grid-template-columns:12px 123px 93px 93px 15px 93px 93px 11px 50px 1fr}
.oo .cols span{border-right:1px solid #888}
.oo .cols .sel{background:#969696}
.oo .cols span:last-child{padding-left:12px;border:0}
.oo .rows{color:#fff;font:11px/19px "Open Sans",sans-serif;border-right:1px solid #888}
.oo .rows span{height:20px;padding-top:3px;line-height:18px;border-bottom:1px solid #888}
.oo .vs{grid-column:3;grid-row:1/3;display:flex;flex-direction:column;align-items:center;padding:1px 0}
.oo .vs button,.oo .hs button{width:13px;height:13px;border:1px solid #222;background:#404040;justify-content:center;color:#999}
.oo .vs button svg,.oo .hs button svg{width:7px;height:7px}
.oo .vs i{width:13px;height:164px;margin:75px 0 auto;border:1px solid #222;background:repeating-linear-gradient(#999 0 1px,transparent 1px 2px) center/5px 12px no-repeat #404040}
.oo .hs{height:14px;display:flex;align-items:center;padding:0 14px 0 1px}
.oo .hs i{flex:1;height:13px;margin:0 101px 0 1px;border:1px solid #222;background:repeating-linear-gradient(90deg,#999 0 1px,transparent 1px 2px) center/13px 6px no-repeat #404040}
.oo .chart{margin-top:22px;height:202px;font:9px/12px "Open Sans",sans-serif;color:#777;background:linear-gradient(#ccc,#ccc) 120px 0/1px 100% no-repeat,repeating-linear-gradient(90deg,#e4e4e4 0 1px,transparent 1px 75px) 121px 0/376px 100% no-repeat}
.oo .chart div{flex:1}
.oo .chart b{width:112px;margin-right:10px}
.oo .chart i{height:9px;margin-right:4px}
.oo .axis{margin:10px 0 0 83px;font:9px/14px "Open Sans",sans-serif;color:#777}
.oo .axis span{width:75px}
.oo .panel{border-left:1px solid #222;padding:7px 10px 0 15px;font-size:11px;line-height:14px;overflow:hidden;display:flex;flex-direction:column;align-items:stretch}
.oo .panel>label,.oo .panel h2{font-weight:700;flex:none}
.oo .panel>label{margin-bottom:1px}
.oo .panel>*{flex:none}
.oo .panel hr{width:auto;height:1px;margin:8px 0}
.oo .line{display:flex;align-items:center;margin:9px 0 8px}
.oo .stroke{width:93px;background-image:none;padding:0 3px 0 10px;justify-content:space-between}
.oo .stroke i{width:60px;height:1px;background:#fff}
.oo .line span{margin:0 8px 0 auto}
.oo .color{width:45px;background-image:none;padding:0 2px 0 1px;justify-content:space-between}
.oo .color i{width:31px;height:18px;background:#000}
.oo .panel p{line-height:15px}
.oo .borders{display:grid;grid-template-columns:repeat(6,24px);row-gap:15px;padding:12px 0 4px 4px}
.oo .borders svg{width:14px;height:14px}
.oo .spin{width:60px;text-align:right;padding-right:19px;background-image:url("data:image/svg+xml,%3Csvg xmlns='http://www.w3.org/2000/svg' width='8' height='16'%3E%3Cpath d='M1 4l3-2 3 2M1 12l3 2 3-2' fill='none' stroke='%23ccc'/%3E%3C/svg%3E")}
.oo .ta{margin:16px 0 8px}
.oo .angle{display:flex;align-items:center;gap:8px}
.oo .rail2{border-left:1px solid #222;padding-top:15px;display:flex;flex-direction:column;gap:8px;color:#8a8a8a;overflow:hidden}
.oo .rail2 button{height:30px;justify-content:center;flex:none}
.oo .rail2 .act{background:#707070;color:#fff}
.oo-foot{height:25px;border-top:1px solid #222;display:flex;font-size:11px}
.oo-foot .nav{width:115px;border-right:1px solid #222;padding-left:14px;display:flex;gap:7px;color:#888}
.oo-foot .add{width:60px;padding-left:10px;display:flex;gap:8px}
.oo-foot .tab{background:#555;color:#bbb;border-right:1px solid #222;width:158px;justify-content:center}
.oo-foot .t3{width:135px}
.oo-foot .t4{width:114px}
.oo-foot .on{width:108px;background:#333;color:#fff;border-top:4px solid #467f5b;padding-bottom:2px;font-weight:700}
.oo-foot .zoom{margin-left:auto;display:flex;align-items:center;gap:17px;padding-right:42px}

/* PlanMaker */
.pm{background:#eee;color:#555;border-top:1px solid #333;border-bottom:1px solid #111}
.pm .dim{color:#b5b5b5}
.pm-title{height:23px;background:#569b3f;color:#a9d29c;display:grid;align-items:center;padding-left:6px;grid-template-columns:20px 1fr 25px 27px 20px}
.pm-title svg:first-child{width:14px;height:14px}
.pm-title button{color:#dcecd6}
.pm-nav{height:20px;background:#569b3f;display:flex;color:#dcecd6}
.pm-tabs{width:472px;background:#327a33;clip-path:polygon(0 0,450px 0,472px 20px,0 20px);display:grid;grid-template-columns:44px 41px 62px 51px 60px 48px 76px 54px;padding-left:3px}
.pm-tabs button{justify-content:center;padding-top:3px}
.pm-tabs .on{background:#eee;color:#2f8a3a;margin-top:2px;padding-top:1px}
.pm-nav .help{margin-left:auto;display:flex;gap:12px;align-items:center;padding-right:7px}
.pm-ribbon{height:96px;display:flex}
.pm-ribbon .g{flex:none;display:flex;flex-direction:column;padding-top:6px;background:linear-gradient(#ccc,#ccc) right bottom/1px 92px no-repeat;border-bottom:1px solid #ccc}
.pm-ribbon .g1{width:59px}.pm-ribbon .g2{width:141px}.pm-ribbon .g3{width:105px;padding-top:5px}.pm-ribbon .g4{width:109px}.pm-ribbon .g5{width:272px;padding-top:8px}
.pm-ribbon .g6{width:39px;padding-top:5px}.pm-ribbon .g7{width:74px;padding-top:5px}.pm-ribbon .g8{width:59px;padding-top:5px}.pm-ribbon .g9{width:39px}.pm-ribbon .rest{flex:1;background:none}
.pm .lab{margin-top:auto;margin-right:1px;height:19px;line-height:20px;font-size:11px;text-align:center;background:#e5e5e5;color:#666;white-space:nowrap;flex:none}
.pm .cr{background:linear-gradient(135deg,transparent 50%,#888 50%) right 1px bottom 1px/5px 5px no-repeat #e5e5e5}
.pm .pair{display:flex}
.pm .big{flex-direction:column;gap:8px;align-items:center}
.pm .g1 .pair{padding:2px 0 0 7px;gap:5px}
.pm .g1 .pair>div{display:flex;flex-direction:column;gap:6px}
.pm .g1 .big{gap:10px}
.pm .r{height:20px}
.pm .g2 .r,.pm .g4 .r{margin-bottom:3px}
.pm .g3 .r{margin-bottom:1px}
.pm select,.pm .name,.pm .form{background:#fff;border:1px solid #b3c5dc;height:20px;padding-left:2px;color:#333}
.pm select,.pm .name{background:#fff url("data:image/svg+xml,%3Csvg xmlns='http://www.w3.org/2000/svg' width='8' height='6'%3E%3Cpath d='M1 1l3 3 3-3' fill='none' stroke='%23555'/%3E%3C/svg%3E") right 4px center no-repeat}
.pm .g2 .r{padding-left:3px}
.pm .g2 .r1{grid-template-columns:134px}
.pm .g2 .r2{grid-template-columns:57px 23px 22px 21px 1fr}
.pm .g2 .r2 select{width:52px}
.pm .g2 .r3{padding-left:4px;grid-template-columns:20px 16px 9px 23px 1fr}
.pm .t{font-size:12px}
.pm .g3 .r{padding-left:4px}
.pm .g3 .r1{grid-template-columns:18px 22px 20px 1fr}
.pm .g3 .r2{grid-template-columns:20px 16px 20px 21px 1fr}
.pm .g3 .r3{padding-left:2px;grid-template-columns:24px 20px 20px 20px 1fr}
.pm .act{background:#dcdcdc;width:19px;height:20px;justify-content:center}
.pm .g3 .r1 button:not(.act){padding-left:3px}
.pm .g4 .r1{padding-left:2px;grid-template-columns:104px}
.pm .g4 .r2,.pm .g4 .r3{padding-left:4px;grid-template-columns:22px 1fr;height:18px}
.pm .g5{font-size:11px}
.pm .g5 .r{height:29px;padding-left:3px}
.pm .g5 .r1{grid-template-columns:20px 72px 14px 20px 127px 1fr}
.pm .g5 .r2{grid-template-columns:20px 68px 18px 20px 88px 1fr}
.pm .g6 .r,.pm .g7 .r{padding-left:3px;grid-template-columns:20px 1fr}
.pm .g7 .pair{padding-left:8px;gap:4px}
.pm .g7 .big{padding-top:5px;gap:13px}
.pm .sg{color:#5a4c96;font-size:15px}
.pm .g8 .pair{padding-left:6px;gap:8px}
.pm .g8 .big{padding-top:4px}
.pm .g9 .big{padding:3px 0 0 3px}
.pm-fx{height:25px;border-bottom:1px solid #ccc;display:grid;align-items:center;padding-left:5px;grid-template-columns:99px 20px 20px 19px 1fr 25px}
.pm-fx .name{width:92px;height:21px}
.pm-fx .fx{font-size:16px}
.pm-fx span,.pm-tools span{padding-left:6px;color:#777;align-self:start}
.pm-tools{height:22px;border-bottom:1px solid #ccc;display:grid;align-items:center;padding-left:6px;color:#666;grid-template-columns:21px 4px 21px 4px 21px 3px 21px 13px 21px 15px 5px 20px 3px 20px 12px 20px 13px 21px 3px 19px 1fr}
.pm hr{background:#c4c4c4;height:16px}
.pm-tools span{padding:0}
.pm-grid{flex:1;min-height:0;display:grid;grid-template-columns:30px 1fr 12px 10px;grid-template-rows:17px 1fr}
.pm .corner{background:#fff;border:1px solid #222;border-width:0 2px 2px 0}
.pm .cols{background:#fff;border-bottom:2px solid #333;color:#222;font-size:9px;line-height:17px;font-weight:600;grid-template-columns:14px 139px 105px 105px 16px 105px 105px 12px 57px 57px 57px 56px 57px 1fr}
.pm .cols span{border-right:1px solid #222}
.pm .cols span:last-child{border:0}
.pm .cols .sel{background:#aad2fb}
.pm .rows{background:#fff;border-right:2px solid #222;color:#222;font-size:9px;font-weight:600;display:flex;flex-direction:column}
.pm .rows span{flex:1;border-bottom:1px solid #444;display:flex;align-items:center;justify-content:center;padding-top:3px}
.pm .rows span:first-child{flex:0 0 24px}
.pm .vs{grid-column:3;grid-row:1/3;display:flex;flex-direction:column;align-items:center;padding:3px 0 2px}
.pm .vs i{width:12px;height:45px;background:#c6c6c6;margin:62px 0 auto}
.pm .vs button{margin-bottom:3px}
.pm .vs .dot{width:4px;height:4px;border-radius:2px;background:#d33;margin:2px 0 4px}
.pm .side{grid-column:4;grid-row:1/3;padding-top:132px}
.pm .side button{width:8px;height:43px;border:1px solid #999;border-radius:2px;background:#fff;color:#888;margin-left:1px}
.pm .side svg{width:5px;height:5px}
.pm .chart{margin-top:7px;height:226px;font-size:10px;line-height:14px;color:#777;background:repeating-linear-gradient(90deg,#ddd 0 1px,transparent 1px 84px) 134px 0/421px 100% no-repeat}
.pm .chart div{flex:1}
.pm .chart b{width:126px;margin-right:9px;font-size:9px}
.pm .chart i{height:11px;margin-right:3px}
.pm .axis{margin:9px 0 0 92px;font-size:9px;color:#777}
.pm .axis span{width:84px}
.pm-sheets{height:23px;border:1px solid #ccc;border-top-color:#999;border-width:1px 0;display:grid;grid-template-columns:22px 23px 24px 23px 3px 96px 145px 122px 11px 1fr 22px;color:#333;font-size:11px}
.pm-sheets>button{justify-content:center;border-right:1px solid #ccc}
.pm-sheets .on{background:#fff;border:1px solid #222;border-width:0 1px 2px;font-weight:700;color:#111}
.pm-sheets .z{overflow:hidden}
.pm .hs{display:flex;align-items:center;padding:0 8px;gap:6px;font-size:16px}
.pm .hs i{width:172px;height:12px;background:#c6c6c6;margin-right:auto}
.pm-status{height:22px;display:grid;align-items:center;color:#555;font-size:11px;grid-template-columns:339px 1fr 27px 37px 7px 42px 12px 88px 22px 36px 17px;column-gap:0}
.pm-status>svg{width:14px;height:14px}
.pm-status input{background-image:linear-gradient(#c4c4c4,#c4c4c4)}
.pm-status input::-webkit-slider-thumb{width:8px;height:8px;border:1px solid #999;border-radius:4px;background:#fff}
.pm-status button{padding-left:4px}

/* LibreOffice */
.lo{background:#efefef;color:#222;border-top:2px solid #3a3a3a;border-left:1px solid #555;border-bottom:2px solid #333}
.lo-head{background:linear-gradient(#fff 20%,#efefef);border-bottom:1px solid #aaa}
.lo .dim{color:#b0b0b0}
.lo-title{height:28px;color:#999;display:grid;align-items:center;padding-left:8px;grid-template-columns:21px 1fr 45px 46px 31px;font-size:11px}
.lo-menu{height:28px;display:grid;align-items:center;padding-left:8px;color:#000;grid-template-columns:43px 72px 56px 63px 53px 99px 52px 47px 47px 54px 1fr 19px;font-size:11px}
.lo-menu button{display:block}
.lo-tb1{height:32px;display:grid;align-items:center;padding-left:8px;color:#333;grid-template-columns:30px 14px 30px 14px 30px 14px 11px 32px 35px 28px 11px 33px 34px 29px 10px 33px 31px 9px 30px 14px 30px 13px 12px 31px 31px 9px 30px 14px 30px 13px 11px 33px 33px 34px 29px 11px 33px 33px 33px 1fr}
.lo-tb1 svg,.lo-tb2 svg,.lo .side svg{width:22px;height:22px}
.lo svg.w24{width:24px}
.lo svg.c{width:8px;height:8px}
.lo svg.s12{width:12px;height:12px}
.lo svg.s14{width:14px;height:14px}
.lo hr{background:#c0c0c0;height:18px}
.lo-tb2{height:42px;display:grid;align-items:center;padding:4px 0 0 4px;color:#333;grid-template-columns:192px 62px 11px 32px 32px 30px 13px 8px 31px 13px 31px 13px 11px 33px 33px 30px 11px 27px 39px 30px 11px 30px 11px 33px 33px 30px 9px 30px 16px 54px 1fr}
.lo select,.lo .name{background:#fff url("data:image/svg+xml,%3Csvg xmlns='http://www.w3.org/2000/svg' width='18' height='22'%3E%3Cpath d='M.5 0v22' stroke='%23ccc'/%3E%3Cpath d='M5 9l4 4 4-4' fill='none' stroke='%23555'/%3E%3C/svg%3E") right center no-repeat;border:1px solid #adadad;height:24px;padding-left:2px;width:184px;color:#000}
.lo select:nth-child(2){width:59px}
.lo-tb2 .t{width:22px;font-size:18px}
.lo-tb2 .pct{font-size:22px}
.lo-tb2 .un{line-height:20px;border-bottom:1px solid #1e8bcd;width:12px;margin-left:5px}
.lo-tb2 .act{width:32px;height:33px;background:#cce8ff;border:1px solid #99d1ff;border-radius:2px;justify-content:center}
.lo-body{flex:1;min-height:0;display:grid;grid-template-columns:1fr 48px}
.lo .main{display:flex;flex-direction:column;min-width:0;min-height:0}
.lo-fx{height:32px;display:grid;align-items:center;padding:0 0 3px 4px;grid-template-columns:147px 7px 23px 26px 12px 23px 1fr 26px;flex:none}
.lo-fx .name{width:144px}
.lo-fx .form{background:#fff;border:1px solid #adadad;height:23px;margin-right:6px}
.lo .fx{color:#1e8bcd;font-size:21px;justify-content:center;width:22px}
.lo .eq{font-size:20px;font-weight:700;padding-left:5px}
.lo-grid{flex:1;min-height:0;display:grid;grid-template-columns:33px 1fr 16px;grid-template-rows:19px 1fr}
.lo .corner{border:1px solid #666;border-width:0 1px 1px 0}
.lo .cols{border-bottom:1px solid #666;line-height:19px;color:#222;grid-template-columns:14px 173px 129px 129px 20px 129px 129px 14px 70px 1fr}
.lo .cols span{border-right:1px solid #666}
.lo .cols span:last-child{padding-left:16px;border:0}
.lo .cols .sel{background:#0078d7;color:#fff;font-weight:700;border:0}
.lo .rows{border-right:1px solid #666}
.lo .rows span{height:29px;line-height:29px;border-bottom:1px solid #666}
.lo .vs{grid-column:3;grid-row:1/3}
.lo .vs em{display:block;height:5px;background:linear-gradient(#111,#111) center/9px 1px no-repeat #a0a0a0}
.lo .vs i{display:block;width:2px;height:68px;margin:116px 0 0 7px;background:#808080}
.lo .sheet::after{content:"";position:absolute;left:722px;top:4px;bottom:4px;width:1px;background:repeating-linear-gradient(#666 0 5px,transparent 5px 10px)}
.lo .chart{margin-top:3px;color:#595959;background:linear-gradient(#ddd,#ddd) 162px 0/1px 100% no-repeat}
.lo .chart div{height:23px;flex:none}
.lo .chart b{width:159px;margin-right:4px;font-size:11px}
.lo .chart i{height:14px;margin-right:3px}
.lo-hs{height:16px;display:flex;justify-content:space-between;padding-left:16px;flex:none}
.lo-hs i{width:384px;height:2px;margin-top:8px;background:#808080}
.lo-hs em{width:5px;height:16px;margin-right:17px;background:linear-gradient(#111,#111) center/1px 9px no-repeat #a0a0a0}
.lo-sheets{height:23px;border-bottom:1px solid #999;display:grid;padding-left:10px;color:#000;flex:none;grid-template-columns:22px 22px 21px 27px 25px 117px 163px 142px 1fr;font-size:11px}
.lo-sheets button{color:#000}
.lo-sheets button:nth-child(-n+4){color:#999}
.lo-sheets button:nth-child(n+7){padding-left:14px}
.lo-sheets .add svg{stroke-width:3}
.lo-sheets .on{background:linear-gradient(#666,#666) bottom/100% 3px no-repeat #fff;font-weight:700;justify-content:center;height:22px}
.lo .side{border-left:1px solid #999;position:relative;display:flex;flex-direction:column;align-items:center;color:#333}
.lo .side button{height:35px;width:33px;justify-content:center;flex:none}
.lo .side .ham{height:28px}
.lo .side .act{background:#cce8ff;border:1px solid #99d1ff;border-radius:2px;height:34px}
.lo .side .handle{position:absolute;left:0;top:144px;width:6px;height:73px;background:#6b6b6b;color:#fff}
.lo-status{height:21px;display:grid;align-items:center;color:#000;font-size:11px;grid-template-columns:98px 76px 162px 138px 67px 30px 30px 30px 135px 144px 1fr}
.lo-status>*{height:16px;border-right:1px solid #bbb;padding-left:10px}
.lo-status>span:nth-child(6){padding-left:8px}
.lo-status>:last-child{border:0}
.lo-status svg.s12{margin-top:2px}
.lo-status div{display:grid;grid-template-columns:15px 98px 1fr;align-items:center;gap:0 5px;padding-left:8px}
.lo-status .big{font-size:18px;font-weight:700}
.lo-status input{background-image:linear-gradient(#777,#777)}
.lo-status input::-webkit-slider-thumb{border:1px solid #666}
```
